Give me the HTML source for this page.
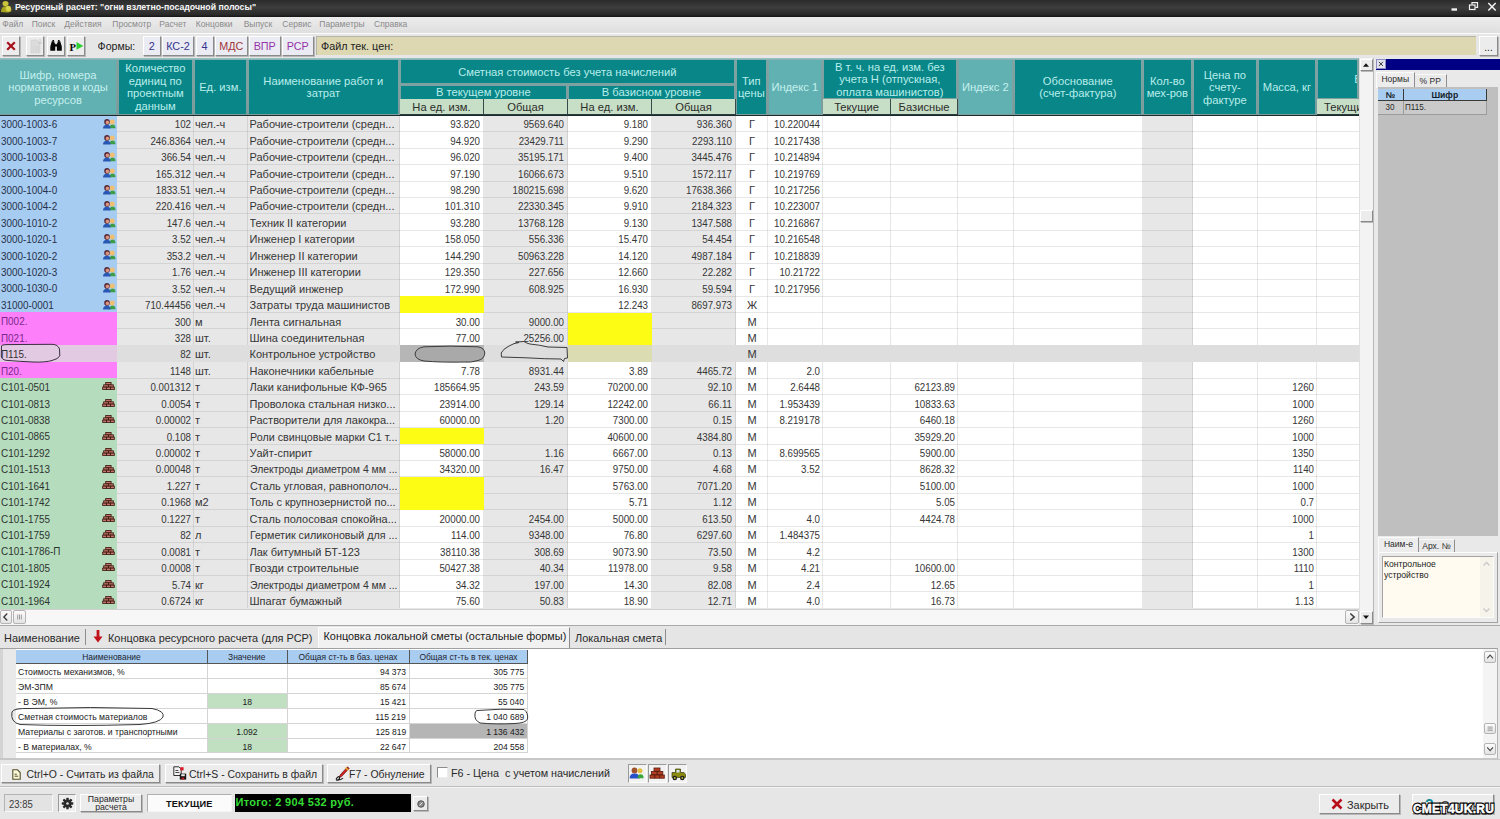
<!DOCTYPE html><html lang="ru"><head><meta charset="utf-8"><title>Ресурсный расчет</title><style>
html,body{margin:0;padding:0}
body{width:1500px;height:819px;overflow:hidden;position:relative;background:#e6e6e6;font-family:"Liberation Sans",sans-serif;font-size:11px;color:#363636}
div{position:absolute;box-sizing:border-box;white-space:nowrap;overflow:hidden}
.n{text-align:right;transform:scaleX(.885);transform-origin:100% 50%}
.k{display:inline-block;transform:scaleX(.9);transform-origin:0 50%}
.hd{background:#098687;color:#b8eeec;text-align:center;display:flex;align-items:center;justify-content:center;white-space:normal;line-height:12.5px;font-size:11.2px}
.hl{background:#62b1b2;color:#c4f0ee}
.sh{background:#c7dfc6;color:#2c2c2c;text-align:center;font-size:11.2px;line-height:16.500px;border-right:1px solid #3a4a4a;border-bottom:1px solid #2a3a3a}
.btn{background:#ececec;border:1px solid #fff;border-right-color:#8a8a8a;border-bottom-color:#8a8a8a;box-shadow:1px 1px 0 #b8b8b8}
.c{line-height:19.5px}
</style></head><body>
<div style="left:0px;top:0px;width:1500px;height:17px;background:linear-gradient(#2b2b2b,#3d3d3d 45%,#2a2a2a 85%,#161616)"></div>
<svg style="position:absolute;left:0;top:0" width="14" height="15" viewBox="0 0 14 15"><ellipse cx="5.5" cy="3.6" rx="3" ry="2.6" fill="#c9c43a"/><path d="M1 12 Q1 6 6 6.2 Q11.5 6.5 11.5 10 Q11.5 12.5 7 12.5 Z" fill="#a8a420"/><ellipse cx="8.3" cy="8.6" rx="2.6" ry="2.8" fill="#d8d44a"/></svg>
<div style="left:15px;top:0px;width:400px;height:17px;color:#f6f6f6;font-weight:bold;font-size:8.75px;line-height:15px">Ресурсный расчет: "огни взлетно-посадочной полосы"</div>
<svg style="position:absolute;left:1440px;top:0" width="60" height="17" viewBox="0 0 60 17" fill="none" stroke="#f2f2f2"><path d="M11.5 9.5h5.5" stroke-width="2.4"/><rect x="29.5" y="5" width="5.5" height="4.5" stroke-width="1.2"/><path d="M32 4.5V2.7h5.5v4.6h-2" stroke-width="1.2"/><path d="M48.3 3l7.4 7.6M55.7 3l-7.4 7.6" stroke-width="1.5"/></svg>
<div style="left:0px;top:17px;width:1500px;height:16px;background:linear-gradient(#ececec,#dfdfdf)"></div>
<div style="left:2.3px;top:17px;width:70px;height:16px;color:#8a8a8a;font-size:8.5px;line-height:15.5px">Файл</div>
<div style="left:31.7px;top:17px;width:70px;height:16px;color:#8a8a8a;font-size:8.5px;line-height:15.5px">Поиск</div>
<div style="left:64.3px;top:17px;width:70px;height:16px;color:#8a8a8a;font-size:8.5px;line-height:15.5px">Действия</div>
<div style="left:112.3px;top:17px;width:70px;height:16px;color:#8a8a8a;font-size:8.5px;line-height:15.5px">Просмотр</div>
<div style="left:159.3px;top:17px;width:70px;height:16px;color:#8a8a8a;font-size:8.5px;line-height:15.5px">Расчет</div>
<div style="left:195.7px;top:17px;width:70px;height:16px;color:#8a8a8a;font-size:8.5px;line-height:15.5px">Концовки</div>
<div style="left:243.7px;top:17px;width:70px;height:16px;color:#8a8a8a;font-size:8.5px;line-height:15.5px">Выпуск</div>
<div style="left:282.3px;top:17px;width:70px;height:16px;color:#8a8a8a;font-size:8.5px;line-height:15.5px">Сервис</div>
<div style="left:319.3px;top:17px;width:70px;height:16px;color:#8a8a8a;font-size:8.5px;line-height:15.5px">Параметры</div>
<div style="left:374px;top:17px;width:70px;height:16px;color:#8a8a8a;font-size:8.5px;line-height:15.5px">Справка</div>
<div style="left:0px;top:32.5px;width:1500px;height:25.5px;background:#e6e6e6;border-top:1.5px solid #fbfbfb"></div>
<div class="btn" style="left:2px;top:36px;width:18px;height:19.5px;"></div>
<div class="btn" style="left:26px;top:36px;width:18px;height:19.5px;"></div>
<div class="btn" style="left:46.5px;top:36px;width:18px;height:19.5px;"></div>
<div class="btn" style="left:66.5px;top:36px;width:18px;height:19.5px;"></div>
<svg style="position:absolute;left:0;top:33px" width="90" height="25" viewBox="0 0 90 25"><path d="M7.2 9.2l7.6 7.6M14.8 9.2l-7.6 7.6" stroke="#a8101c" stroke-width="2.2" fill="none"/><g fill="#d4d4d4"><path d="M31 7h6l3 3v10h-9z" fill="#dcdcdc" stroke="#cfcfcf" stroke-width=".6"/><rect x="33" y="13" width="1.2" height="6"/><rect x="35.4" y="13" width="1.2" height="6"/><rect x="37.6" y="13" width="1.2" height="6"/><path d="M40 6v5M38 9l2 2 2-2" stroke="#c8c8c8" fill="none"/></g><g fill="#080808"><path d="M51.8 8.2h2.6v2h.8v7.6h-4.9v-4.3z"/><path d="M57.6 8.2h2.6l1.6 5.3v4.3h-4.9v-7.6h.7z"/><rect x="54.6" y="11.2" width="3" height="2.4"/><rect x="52.4" y="7" width="1.6" height="1.4"/><rect x="58" y="7" width="1.6" height="1.4"/></g><path d="M76.5 9l6.8 3.9-6.8 3.9z" fill="#2fd02f"/><text x="69.6" y="18" font-family="Liberation Serif,serif" font-weight="bold" font-size="10.5" fill="#080808">Р</text></svg>
<div style="left:97.6px;top:36px;width:40px;height:20px;font-size:10.6px;line-height:20px;color:#222">Формы:</div>
<div class="btn" style="left:142.5px;top:36px;width:18.5px;height:19.5px;color:#34348c;text-align:center;font-size:10.8px;line-height:18px;background:#ebebf4">2</div>
<div class="btn" style="left:162px;top:36px;width:32px;height:19.5px;color:#34348c;text-align:center;font-size:10.8px;line-height:18px;background:#ebebf4">КС-2</div>
<div class="btn" style="left:195.5px;top:36px;width:18px;height:19.5px;color:#34348c;text-align:center;font-size:10.8px;line-height:18px;background:#ebebf4">4</div>
<div class="btn" style="left:215px;top:36px;width:32.5px;height:19.5px;color:#a03434;text-align:center;font-size:10.8px;line-height:18px;background:#ebebf4">МДС</div>
<div class="btn" style="left:249px;top:36px;width:31.5px;height:19.5px;color:#9434a4;text-align:center;font-size:10.8px;line-height:18px;background:#ebebf4">ВПР</div>
<div class="btn" style="left:282px;top:36px;width:31.5px;height:19.5px;color:#9434a4;text-align:center;font-size:10.8px;line-height:18px;background:#ebebf4">РСР</div>
<div style="left:316px;top:35.5px;width:1160px;height:19.5px;background:#ddd8b2;border-top:1px solid #b4b4a8;border-left:1px solid #b4b4a8;font-size:10.8px;line-height:18.5px;padding-left:4px;color:#222">Файл тек. цен:</div>
<div class="btn" style="left:1479px;top:36px;width:19px;height:19.5px;text-align:center;line-height:22px;font-size:10px;color:#222">...</div>
<div style="left:0px;top:58px;width:1359px;height:567px;background:#fff"></div>
<div style="left:0px;top:58px;width:1359px;height:57.5px;background:linear-gradient(#9cc8c8,#7fa4a4 2.5px,#7c9c9c)"></div>
<div class="hd hl" style="left:0px;top:60.3px;width:116.1px;height:54.2px;">Шифр, номера нормативов и коды ресурсов</div>
<div class="hd" style="left:118.6px;top:60.3px;width:73.5px;height:54.2px;">Количество единиц по проектным данным</div>
<div class="hd" style="left:194.6px;top:60.3px;width:51.5px;height:54.2px;">Ед. изм.</div>
<div class="hd" style="left:248.6px;top:60.3px;width:149.5px;height:54.2px;">Наименование работ и затрат</div>
<div class="hd" style="left:400.6px;top:60.3px;width:333.5px;height:23.2px;">Сметная стоимость без учета начислений</div>
<div class="hd" style="left:400.6px;top:85.5px;width:165.5px;height:13px;">В текущем уровне</div>
<div class="hd" style="left:568.6px;top:85.5px;width:165.5px;height:13px;">В базисном уровне</div>
<div class="hd" style="left:736.6px;top:60.3px;width:29.5px;height:54.2px;">Тип цены</div>
<div class="hd hl" style="left:768.6px;top:60.3px;width:52.5px;height:54.2px;">Индекс 1</div>
<div class="hd" style="left:823.6px;top:60.3px;width:132.5px;height:38.2px;">В т. ч. на ед. изм. без учета Н (отпускная, оплата машинистов)</div>
<div class="hd hl" style="left:958.6px;top:60.3px;width:53.5px;height:54.2px;">Индекс 2</div>
<div class="hd" style="left:1014.6px;top:60.3px;width:126.5px;height:54.2px;">Обоснование<br>(счет-фактура)</div>
<div class="hd" style="left:1143.6px;top:60.3px;width:47.5px;height:54.2px;">Кол-во мех-ров</div>
<div class="hd" style="left:1193.6px;top:60.3px;width:62.5px;height:54.2px;">Цена по счету-фактуре</div>
<div class="hd" style="left:1258.6px;top:60.3px;width:56.5px;height:54.2px;">Масса, кг</div>
<div class="hd" style="left:1317.6px;top:60.3px;width:39.5px;height:38.2px;"><span style="position:absolute;right:-4.5px;top:12.5px">В</span></div>
<div class="sh" style="left:400px;top:99.4px;width:84px;height:15.6px;">На ед. изм.</div>
<div class="sh" style="left:484px;top:99.4px;width:84px;height:15.6px;">Общая</div>
<div class="sh" style="left:568px;top:99.4px;width:84px;height:15.6px;">На ед. изм.</div>
<div class="sh" style="left:652px;top:99.4px;width:84px;height:15.6px;">Общая</div>
<div class="sh" style="left:823px;top:99.4px;width:68px;height:15.6px;">Текущие</div>
<div class="sh" style="left:891px;top:99.4px;width:67px;height:15.6px;">Базисные</div>
<div class="sh" style="left:1317px;top:99.4px;width:60px;height:15.6px;border-right:0;text-align:left;padding-left:7px">Текущие</div>
<div style="left:118px;top:115.3px;width:76px;height:493.11px;background:#e7e7e7"></div>
<div style="left:194px;top:115.3px;width:54px;height:493.11px;background:#e7e7e7"></div>
<div style="left:248px;top:115.3px;width:152px;height:493.11px;background:#e7e7e7"></div>
<div style="left:484px;top:115.3px;width:84px;height:493.11px;background:#e7e7e7"></div>
<div style="left:652px;top:115.3px;width:84px;height:493.11px;background:#e7e7e7"></div>
<div style="left:1143px;top:115.3px;width:50px;height:493.11px;background:#e7e7e7"></div>
<div style="left:117px;top:131.237px;width:1242px;height:1px;background:rgba(110,110,110,.17)"></div>
<div style="left:117px;top:147.674px;width:1242px;height:1px;background:rgba(110,110,110,.17)"></div>
<div style="left:117px;top:164.111px;width:1242px;height:1px;background:rgba(110,110,110,.17)"></div>
<div style="left:117px;top:180.548px;width:1242px;height:1px;background:rgba(110,110,110,.17)"></div>
<div style="left:117px;top:196.985px;width:1242px;height:1px;background:rgba(110,110,110,.17)"></div>
<div style="left:117px;top:213.422px;width:1242px;height:1px;background:rgba(110,110,110,.17)"></div>
<div style="left:117px;top:229.859px;width:1242px;height:1px;background:rgba(110,110,110,.17)"></div>
<div style="left:117px;top:246.296px;width:1242px;height:1px;background:rgba(110,110,110,.17)"></div>
<div style="left:117px;top:262.733px;width:1242px;height:1px;background:rgba(110,110,110,.17)"></div>
<div style="left:117px;top:279.17px;width:1242px;height:1px;background:rgba(110,110,110,.17)"></div>
<div style="left:117px;top:295.607px;width:1242px;height:1px;background:rgba(110,110,110,.17)"></div>
<div style="left:117px;top:312.044px;width:1242px;height:1px;background:rgba(110,110,110,.17)"></div>
<div style="left:117px;top:328.481px;width:1242px;height:1px;background:rgba(110,110,110,.17)"></div>
<div style="left:117px;top:344.918px;width:1242px;height:1px;background:rgba(110,110,110,.17)"></div>
<div style="left:117px;top:361.355px;width:1242px;height:1px;background:rgba(110,110,110,.17)"></div>
<div style="left:117px;top:377.792px;width:1242px;height:1px;background:rgba(110,110,110,.17)"></div>
<div style="left:117px;top:394.229px;width:1242px;height:1px;background:rgba(110,110,110,.17)"></div>
<div style="left:117px;top:410.666px;width:1242px;height:1px;background:rgba(110,110,110,.17)"></div>
<div style="left:117px;top:427.103px;width:1242px;height:1px;background:rgba(110,110,110,.17)"></div>
<div style="left:117px;top:443.54px;width:1242px;height:1px;background:rgba(110,110,110,.17)"></div>
<div style="left:117px;top:459.977px;width:1242px;height:1px;background:rgba(110,110,110,.17)"></div>
<div style="left:117px;top:476.414px;width:1242px;height:1px;background:rgba(110,110,110,.17)"></div>
<div style="left:117px;top:492.851px;width:1242px;height:1px;background:rgba(110,110,110,.17)"></div>
<div style="left:117px;top:509.288px;width:1242px;height:1px;background:rgba(110,110,110,.17)"></div>
<div style="left:117px;top:525.725px;width:1242px;height:1px;background:rgba(110,110,110,.17)"></div>
<div style="left:117px;top:542.162px;width:1242px;height:1px;background:rgba(110,110,110,.17)"></div>
<div style="left:117px;top:558.599px;width:1242px;height:1px;background:rgba(110,110,110,.17)"></div>
<div style="left:117px;top:575.036px;width:1242px;height:1px;background:rgba(110,110,110,.17)"></div>
<div style="left:117px;top:591.473px;width:1242px;height:1px;background:rgba(110,110,110,.17)"></div>
<div style="left:117px;top:607.91px;width:1242px;height:1px;background:rgba(110,110,110,.17)"></div>
<div style="left:117px;top:115.3px;width:1px;height:493.11px;background:rgba(110,110,110,.17)"></div>
<div style="left:193px;top:115.3px;width:1px;height:493.11px;background:rgba(110,110,110,.17)"></div>
<div style="left:247px;top:115.3px;width:1px;height:493.11px;background:rgba(110,110,110,.17)"></div>
<div style="left:399px;top:115.3px;width:1px;height:493.11px;background:rgba(110,110,110,.17)"></div>
<div style="left:483px;top:115.3px;width:1px;height:493.11px;background:rgba(110,110,110,.17)"></div>
<div style="left:567px;top:115.3px;width:1px;height:493.11px;background:rgba(110,110,110,.17)"></div>
<div style="left:651px;top:115.3px;width:1px;height:493.11px;background:rgba(110,110,110,.17)"></div>
<div style="left:735px;top:115.3px;width:1px;height:493.11px;background:rgba(110,110,110,.17)"></div>
<div style="left:767px;top:115.3px;width:1px;height:493.11px;background:rgba(110,110,110,.17)"></div>
<div style="left:822px;top:115.3px;width:1px;height:493.11px;background:rgba(110,110,110,.17)"></div>
<div style="left:890px;top:115.3px;width:1px;height:493.11px;background:rgba(110,110,110,.17)"></div>
<div style="left:957px;top:115.3px;width:1px;height:493.11px;background:rgba(110,110,110,.17)"></div>
<div style="left:1013px;top:115.3px;width:1px;height:493.11px;background:rgba(110,110,110,.17)"></div>
<div style="left:1142px;top:115.3px;width:1px;height:493.11px;background:rgba(110,110,110,.17)"></div>
<div style="left:1192px;top:115.3px;width:1px;height:493.11px;background:rgba(110,110,110,.17)"></div>
<div style="left:1257px;top:115.3px;width:1px;height:493.11px;background:rgba(110,110,110,.17)"></div>
<div style="left:1316px;top:115.3px;width:1px;height:493.11px;background:rgba(110,110,110,.17)"></div>
<div style="left:0px;top:115.1px;width:117.3px;height:16.837px;background:#a7ccf2;color:#26324a;padding-left:.7px;line-height:19.437px"><span class="k">3000-1003-6</span><svg width="13" height="10" viewBox="0 0 13 10" style="position:absolute;left:102.600px;top:3.800px"><path d="M6.600 9.300q0-3.900 3-3.900 2.900 0 2.900 3.900z" fill="#3c9c48"/><circle cx="9.200" cy="3.100" r="2.500" fill="#f0be70"/><path d="M0 9.500q0-3.800 3.900-3.800 3.700 0 3.700 3.800z" fill="#2858b4"/><circle cx="4" cy="2.900" r="2.800" fill="#55283a"/><circle cx="4.400" cy="3.400" r="1.800" fill="#dc947c"/></svg></div>
<div class="n c" style="left:118px;top:115.3px;width:73px;height:16.437px;">102</div>
<div class="c" style="left:195px;top:115.3px;width:52px;height:16.437px;">чел.-ч</div>
<div class="c" style="left:249.5px;top:115.3px;width:150.5px;height:16.437px;">Рабочие-строители (средн...</div>
<div class="n c" style="left:400px;top:115.3px;width:80px;height:16.437px;">93.820</div>
<div class="n c" style="left:484px;top:115.3px;width:80px;height:16.437px;">9569.640</div>
<div class="n c" style="left:568px;top:115.3px;width:80px;height:16.437px;">9.180</div>
<div class="n c" style="left:652px;top:115.3px;width:80px;height:16.437px;">936.360</div>
<div class="c" style="left:736px;top:115.3px;width:32px;height:16.437px;text-align:center">Г</div>
<div class="n c" style="left:768px;top:115.3px;width:52px;height:16.437px;">10.220044</div>
<div style="left:0px;top:131.537px;width:117.3px;height:16.837px;background:#a7ccf2;color:#26324a;padding-left:.7px;line-height:19.437px"><span class="k">3000-1003-7</span><svg width="13" height="10" viewBox="0 0 13 10" style="position:absolute;left:102.600px;top:3.800px"><path d="M6.600 9.300q0-3.900 3-3.900 2.900 0 2.900 3.900z" fill="#3c9c48"/><circle cx="9.200" cy="3.100" r="2.500" fill="#f0be70"/><path d="M0 9.500q0-3.800 3.900-3.800 3.700 0 3.700 3.800z" fill="#2858b4"/><circle cx="4" cy="2.900" r="2.800" fill="#55283a"/><circle cx="4.400" cy="3.400" r="1.800" fill="#dc947c"/></svg></div>
<div class="n c" style="left:118px;top:131.737px;width:73px;height:16.437px;">246.8364</div>
<div class="c" style="left:195px;top:131.737px;width:52px;height:16.437px;">чел.-ч</div>
<div class="c" style="left:249.5px;top:131.737px;width:150.5px;height:16.437px;">Рабочие-строители (средн...</div>
<div class="n c" style="left:400px;top:131.737px;width:80px;height:16.437px;">94.920</div>
<div class="n c" style="left:484px;top:131.737px;width:80px;height:16.437px;">23429.711</div>
<div class="n c" style="left:568px;top:131.737px;width:80px;height:16.437px;">9.290</div>
<div class="n c" style="left:652px;top:131.737px;width:80px;height:16.437px;">2293.110</div>
<div class="c" style="left:736px;top:131.737px;width:32px;height:16.437px;text-align:center">Г</div>
<div class="n c" style="left:768px;top:131.737px;width:52px;height:16.437px;">10.217438</div>
<div style="left:0px;top:147.974px;width:117.3px;height:16.837px;background:#a7ccf2;color:#26324a;padding-left:.7px;line-height:19.437px"><span class="k">3000-1003-8</span><svg width="13" height="10" viewBox="0 0 13 10" style="position:absolute;left:102.600px;top:3.800px"><path d="M6.600 9.300q0-3.900 3-3.900 2.900 0 2.900 3.900z" fill="#3c9c48"/><circle cx="9.200" cy="3.100" r="2.500" fill="#f0be70"/><path d="M0 9.500q0-3.800 3.900-3.800 3.700 0 3.700 3.800z" fill="#2858b4"/><circle cx="4" cy="2.900" r="2.800" fill="#55283a"/><circle cx="4.400" cy="3.400" r="1.800" fill="#dc947c"/></svg></div>
<div class="n c" style="left:118px;top:148.174px;width:73px;height:16.437px;">366.54</div>
<div class="c" style="left:195px;top:148.174px;width:52px;height:16.437px;">чел.-ч</div>
<div class="c" style="left:249.5px;top:148.174px;width:150.5px;height:16.437px;">Рабочие-строители (средн...</div>
<div class="n c" style="left:400px;top:148.174px;width:80px;height:16.437px;">96.020</div>
<div class="n c" style="left:484px;top:148.174px;width:80px;height:16.437px;">35195.171</div>
<div class="n c" style="left:568px;top:148.174px;width:80px;height:16.437px;">9.400</div>
<div class="n c" style="left:652px;top:148.174px;width:80px;height:16.437px;">3445.476</div>
<div class="c" style="left:736px;top:148.174px;width:32px;height:16.437px;text-align:center">Г</div>
<div class="n c" style="left:768px;top:148.174px;width:52px;height:16.437px;">10.214894</div>
<div style="left:0px;top:164.411px;width:117.3px;height:16.837px;background:#a7ccf2;color:#26324a;padding-left:.7px;line-height:19.437px"><span class="k">3000-1003-9</span><svg width="13" height="10" viewBox="0 0 13 10" style="position:absolute;left:102.600px;top:3.800px"><path d="M6.600 9.300q0-3.900 3-3.900 2.900 0 2.900 3.900z" fill="#3c9c48"/><circle cx="9.200" cy="3.100" r="2.500" fill="#f0be70"/><path d="M0 9.500q0-3.800 3.900-3.800 3.700 0 3.700 3.800z" fill="#2858b4"/><circle cx="4" cy="2.900" r="2.800" fill="#55283a"/><circle cx="4.400" cy="3.400" r="1.800" fill="#dc947c"/></svg></div>
<div class="n c" style="left:118px;top:164.611px;width:73px;height:16.437px;">165.312</div>
<div class="c" style="left:195px;top:164.611px;width:52px;height:16.437px;">чел.-ч</div>
<div class="c" style="left:249.5px;top:164.611px;width:150.5px;height:16.437px;">Рабочие-строители (средн...</div>
<div class="n c" style="left:400px;top:164.611px;width:80px;height:16.437px;">97.190</div>
<div class="n c" style="left:484px;top:164.611px;width:80px;height:16.437px;">16066.673</div>
<div class="n c" style="left:568px;top:164.611px;width:80px;height:16.437px;">9.510</div>
<div class="n c" style="left:652px;top:164.611px;width:80px;height:16.437px;">1572.117</div>
<div class="c" style="left:736px;top:164.611px;width:32px;height:16.437px;text-align:center">Г</div>
<div class="n c" style="left:768px;top:164.611px;width:52px;height:16.437px;">10.219769</div>
<div style="left:0px;top:180.848px;width:117.3px;height:16.837px;background:#a7ccf2;color:#26324a;padding-left:.7px;line-height:19.437px"><span class="k">3000-1004-0</span><svg width="13" height="10" viewBox="0 0 13 10" style="position:absolute;left:102.600px;top:3.800px"><path d="M6.600 9.300q0-3.900 3-3.900 2.900 0 2.900 3.900z" fill="#3c9c48"/><circle cx="9.200" cy="3.100" r="2.500" fill="#f0be70"/><path d="M0 9.500q0-3.800 3.900-3.800 3.700 0 3.700 3.800z" fill="#2858b4"/><circle cx="4" cy="2.900" r="2.800" fill="#55283a"/><circle cx="4.400" cy="3.400" r="1.800" fill="#dc947c"/></svg></div>
<div class="n c" style="left:118px;top:181.048px;width:73px;height:16.437px;">1833.51</div>
<div class="c" style="left:195px;top:181.048px;width:52px;height:16.437px;">чел.-ч</div>
<div class="c" style="left:249.5px;top:181.048px;width:150.5px;height:16.437px;">Рабочие-строители (средн...</div>
<div class="n c" style="left:400px;top:181.048px;width:80px;height:16.437px;">98.290</div>
<div class="n c" style="left:484px;top:181.048px;width:80px;height:16.437px;">180215.698</div>
<div class="n c" style="left:568px;top:181.048px;width:80px;height:16.437px;">9.620</div>
<div class="n c" style="left:652px;top:181.048px;width:80px;height:16.437px;">17638.366</div>
<div class="c" style="left:736px;top:181.048px;width:32px;height:16.437px;text-align:center">Г</div>
<div class="n c" style="left:768px;top:181.048px;width:52px;height:16.437px;">10.217256</div>
<div style="left:0px;top:197.285px;width:117.3px;height:16.837px;background:#a7ccf2;color:#26324a;padding-left:.7px;line-height:19.437px"><span class="k">3000-1004-2</span><svg width="13" height="10" viewBox="0 0 13 10" style="position:absolute;left:102.600px;top:3.800px"><path d="M6.600 9.300q0-3.900 3-3.900 2.900 0 2.900 3.900z" fill="#3c9c48"/><circle cx="9.200" cy="3.100" r="2.500" fill="#f0be70"/><path d="M0 9.500q0-3.800 3.900-3.800 3.700 0 3.700 3.800z" fill="#2858b4"/><circle cx="4" cy="2.900" r="2.800" fill="#55283a"/><circle cx="4.400" cy="3.400" r="1.800" fill="#dc947c"/></svg></div>
<div class="n c" style="left:118px;top:197.485px;width:73px;height:16.437px;">220.416</div>
<div class="c" style="left:195px;top:197.485px;width:52px;height:16.437px;">чел.-ч</div>
<div class="c" style="left:249.5px;top:197.485px;width:150.5px;height:16.437px;">Рабочие-строители (средн...</div>
<div class="n c" style="left:400px;top:197.485px;width:80px;height:16.437px;">101.310</div>
<div class="n c" style="left:484px;top:197.485px;width:80px;height:16.437px;">22330.345</div>
<div class="n c" style="left:568px;top:197.485px;width:80px;height:16.437px;">9.910</div>
<div class="n c" style="left:652px;top:197.485px;width:80px;height:16.437px;">2184.323</div>
<div class="c" style="left:736px;top:197.485px;width:32px;height:16.437px;text-align:center">Г</div>
<div class="n c" style="left:768px;top:197.485px;width:52px;height:16.437px;">10.223007</div>
<div style="left:0px;top:213.722px;width:117.3px;height:16.837px;background:#a7ccf2;color:#26324a;padding-left:.7px;line-height:19.437px"><span class="k">3000-1010-2</span><svg width="13" height="10" viewBox="0 0 13 10" style="position:absolute;left:102.600px;top:3.800px"><path d="M6.600 9.300q0-3.900 3-3.900 2.900 0 2.900 3.900z" fill="#3c9c48"/><circle cx="9.200" cy="3.100" r="2.500" fill="#f0be70"/><path d="M0 9.500q0-3.800 3.900-3.800 3.700 0 3.700 3.800z" fill="#2858b4"/><circle cx="4" cy="2.900" r="2.800" fill="#55283a"/><circle cx="4.400" cy="3.400" r="1.800" fill="#dc947c"/></svg></div>
<div class="n c" style="left:118px;top:213.922px;width:73px;height:16.437px;">147.6</div>
<div class="c" style="left:195px;top:213.922px;width:52px;height:16.437px;">чел.-ч</div>
<div class="c" style="left:249.5px;top:213.922px;width:150.5px;height:16.437px;">Техник II категории</div>
<div class="n c" style="left:400px;top:213.922px;width:80px;height:16.437px;">93.280</div>
<div class="n c" style="left:484px;top:213.922px;width:80px;height:16.437px;">13768.128</div>
<div class="n c" style="left:568px;top:213.922px;width:80px;height:16.437px;">9.130</div>
<div class="n c" style="left:652px;top:213.922px;width:80px;height:16.437px;">1347.588</div>
<div class="c" style="left:736px;top:213.922px;width:32px;height:16.437px;text-align:center">Г</div>
<div class="n c" style="left:768px;top:213.922px;width:52px;height:16.437px;">10.216867</div>
<div style="left:0px;top:230.159px;width:117.3px;height:16.837px;background:#a7ccf2;color:#26324a;padding-left:.7px;line-height:19.437px"><span class="k">3000-1020-1</span><svg width="13" height="10" viewBox="0 0 13 10" style="position:absolute;left:102.600px;top:3.800px"><path d="M6.600 9.300q0-3.900 3-3.900 2.900 0 2.900 3.900z" fill="#3c9c48"/><circle cx="9.200" cy="3.100" r="2.500" fill="#f0be70"/><path d="M0 9.500q0-3.800 3.900-3.800 3.700 0 3.700 3.800z" fill="#2858b4"/><circle cx="4" cy="2.900" r="2.800" fill="#55283a"/><circle cx="4.400" cy="3.400" r="1.800" fill="#dc947c"/></svg></div>
<div class="n c" style="left:118px;top:230.359px;width:73px;height:16.437px;">3.52</div>
<div class="c" style="left:195px;top:230.359px;width:52px;height:16.437px;">чел.-ч</div>
<div class="c" style="left:249.5px;top:230.359px;width:150.5px;height:16.437px;">Инженер I категории</div>
<div class="n c" style="left:400px;top:230.359px;width:80px;height:16.437px;">158.050</div>
<div class="n c" style="left:484px;top:230.359px;width:80px;height:16.437px;">556.336</div>
<div class="n c" style="left:568px;top:230.359px;width:80px;height:16.437px;">15.470</div>
<div class="n c" style="left:652px;top:230.359px;width:80px;height:16.437px;">54.454</div>
<div class="c" style="left:736px;top:230.359px;width:32px;height:16.437px;text-align:center">Г</div>
<div class="n c" style="left:768px;top:230.359px;width:52px;height:16.437px;">10.216548</div>
<div style="left:0px;top:246.596px;width:117.3px;height:16.837px;background:#a7ccf2;color:#26324a;padding-left:.7px;line-height:19.437px"><span class="k">3000-1020-2</span><svg width="13" height="10" viewBox="0 0 13 10" style="position:absolute;left:102.600px;top:3.800px"><path d="M6.600 9.300q0-3.900 3-3.900 2.900 0 2.900 3.900z" fill="#3c9c48"/><circle cx="9.200" cy="3.100" r="2.500" fill="#f0be70"/><path d="M0 9.500q0-3.800 3.900-3.800 3.700 0 3.700 3.800z" fill="#2858b4"/><circle cx="4" cy="2.900" r="2.800" fill="#55283a"/><circle cx="4.400" cy="3.400" r="1.800" fill="#dc947c"/></svg></div>
<div class="n c" style="left:118px;top:246.796px;width:73px;height:16.437px;">353.2</div>
<div class="c" style="left:195px;top:246.796px;width:52px;height:16.437px;">чел.-ч</div>
<div class="c" style="left:249.5px;top:246.796px;width:150.5px;height:16.437px;">Инженер II категории</div>
<div class="n c" style="left:400px;top:246.796px;width:80px;height:16.437px;">144.290</div>
<div class="n c" style="left:484px;top:246.796px;width:80px;height:16.437px;">50963.228</div>
<div class="n c" style="left:568px;top:246.796px;width:80px;height:16.437px;">14.120</div>
<div class="n c" style="left:652px;top:246.796px;width:80px;height:16.437px;">4987.184</div>
<div class="c" style="left:736px;top:246.796px;width:32px;height:16.437px;text-align:center">Г</div>
<div class="n c" style="left:768px;top:246.796px;width:52px;height:16.437px;">10.218839</div>
<div style="left:0px;top:263.033px;width:117.3px;height:16.837px;background:#a7ccf2;color:#26324a;padding-left:.7px;line-height:19.437px"><span class="k">3000-1020-3</span><svg width="13" height="10" viewBox="0 0 13 10" style="position:absolute;left:102.600px;top:3.800px"><path d="M6.600 9.300q0-3.900 3-3.900 2.900 0 2.900 3.900z" fill="#3c9c48"/><circle cx="9.200" cy="3.100" r="2.500" fill="#f0be70"/><path d="M0 9.500q0-3.800 3.900-3.800 3.700 0 3.700 3.800z" fill="#2858b4"/><circle cx="4" cy="2.900" r="2.800" fill="#55283a"/><circle cx="4.400" cy="3.400" r="1.800" fill="#dc947c"/></svg></div>
<div class="n c" style="left:118px;top:263.233px;width:73px;height:16.437px;">1.76</div>
<div class="c" style="left:195px;top:263.233px;width:52px;height:16.437px;">чел.-ч</div>
<div class="c" style="left:249.5px;top:263.233px;width:150.5px;height:16.437px;">Инженер III категории</div>
<div class="n c" style="left:400px;top:263.233px;width:80px;height:16.437px;">129.350</div>
<div class="n c" style="left:484px;top:263.233px;width:80px;height:16.437px;">227.656</div>
<div class="n c" style="left:568px;top:263.233px;width:80px;height:16.437px;">12.660</div>
<div class="n c" style="left:652px;top:263.233px;width:80px;height:16.437px;">22.282</div>
<div class="c" style="left:736px;top:263.233px;width:32px;height:16.437px;text-align:center">Г</div>
<div class="n c" style="left:768px;top:263.233px;width:52px;height:16.437px;">10.21722</div>
<div style="left:0px;top:279.47px;width:117.3px;height:16.837px;background:#a7ccf2;color:#26324a;padding-left:.7px;line-height:19.437px"><span class="k">3000-1030-0</span><svg width="13" height="10" viewBox="0 0 13 10" style="position:absolute;left:102.600px;top:3.800px"><path d="M6.600 9.300q0-3.900 3-3.900 2.900 0 2.900 3.900z" fill="#3c9c48"/><circle cx="9.200" cy="3.100" r="2.500" fill="#f0be70"/><path d="M0 9.500q0-3.800 3.900-3.800 3.700 0 3.700 3.800z" fill="#2858b4"/><circle cx="4" cy="2.900" r="2.800" fill="#55283a"/><circle cx="4.400" cy="3.400" r="1.800" fill="#dc947c"/></svg></div>
<div class="n c" style="left:118px;top:279.67px;width:73px;height:16.437px;">3.52</div>
<div class="c" style="left:195px;top:279.67px;width:52px;height:16.437px;">чел.-ч</div>
<div class="c" style="left:249.5px;top:279.67px;width:150.5px;height:16.437px;">Ведущий инженер</div>
<div class="n c" style="left:400px;top:279.67px;width:80px;height:16.437px;">172.990</div>
<div class="n c" style="left:484px;top:279.67px;width:80px;height:16.437px;">608.925</div>
<div class="n c" style="left:568px;top:279.67px;width:80px;height:16.437px;">16.930</div>
<div class="n c" style="left:652px;top:279.67px;width:80px;height:16.437px;">59.594</div>
<div class="c" style="left:736px;top:279.67px;width:32px;height:16.437px;text-align:center">Г</div>
<div class="n c" style="left:768px;top:279.67px;width:52px;height:16.437px;">10.217956</div>
<div style="left:0px;top:295.907px;width:117.3px;height:16.837px;background:#a7ccf2;color:#26324a;padding-left:.7px;line-height:19.437px"><span class="k">31000-0001</span><svg width="13" height="10" viewBox="0 0 13 10" style="position:absolute;left:102.600px;top:3.800px"><path d="M6.600 9.300q0-3.900 3-3.900 2.900 0 2.900 3.900z" fill="#3c9c48"/><circle cx="9.200" cy="3.100" r="2.500" fill="#f0be70"/><path d="M0 9.500q0-3.800 3.900-3.800 3.700 0 3.700 3.800z" fill="#2858b4"/><circle cx="4" cy="2.900" r="2.800" fill="#55283a"/><circle cx="4.400" cy="3.400" r="1.800" fill="#dc947c"/></svg></div>
<div class="n c" style="left:118px;top:296.107px;width:73px;height:16.437px;">710.44456</div>
<div class="c" style="left:195px;top:296.107px;width:52px;height:16.437px;">чел.-ч</div>
<div class="c" style="left:249.5px;top:296.107px;width:150.5px;height:16.437px;">Затраты труда машинистов</div>
<div style="left:399.5px;top:296.107px;width:84px;height:16.437px;background:#fcfc14"></div>
<div class="n c" style="left:568px;top:296.107px;width:80px;height:16.437px;">12.243</div>
<div class="n c" style="left:652px;top:296.107px;width:80px;height:16.437px;">8697.973</div>
<div class="c" style="left:736px;top:296.107px;width:32px;height:16.437px;text-align:center">Ж</div>
<div style="left:0px;top:312.344px;width:117.3px;height:16.837px;background:#fd80fa;color:#7a2a8a;padding-left:.7px;line-height:19.437px"><span class="k">П002.</span></div>
<div class="n c" style="left:118px;top:312.544px;width:73px;height:16.437px;">300</div>
<div class="c" style="left:195px;top:312.544px;width:52px;height:16.437px;">м</div>
<div class="c" style="left:249.5px;top:312.544px;width:150.5px;height:16.437px;">Лента сигнальная</div>
<div class="n c" style="left:400px;top:312.544px;width:80px;height:16.437px;">30.00</div>
<div class="n c" style="left:484px;top:312.544px;width:80px;height:16.437px;">9000.00</div>
<div style="left:567.5px;top:312.544px;width:84px;height:16.437px;background:#fcfc14"></div>
<div class="c" style="left:736px;top:312.544px;width:32px;height:16.437px;text-align:center">М</div>
<div style="left:0px;top:328.781px;width:117.3px;height:16.837px;background:#fd80fa;color:#7a2a8a;padding-left:.7px;line-height:19.437px"><span class="k">П021.</span></div>
<div class="n c" style="left:118px;top:328.981px;width:73px;height:16.437px;">328</div>
<div class="c" style="left:195px;top:328.981px;width:52px;height:16.437px;">шт.</div>
<div class="c" style="left:249.5px;top:328.981px;width:150.5px;height:16.437px;">Шина соединительная</div>
<div class="n c" style="left:400px;top:328.981px;width:80px;height:16.437px;">77.00</div>
<div class="n c" style="left:484px;top:328.981px;width:80px;height:16.437px;">25256.00</div>
<div style="left:567.5px;top:328.981px;width:84px;height:16.437px;background:#fcfc14"></div>
<div class="c" style="left:736px;top:328.981px;width:32px;height:16.437px;text-align:center">М</div>
<div style="left:117px;top:345.418px;width:1242px;height:16.437px;background:#dedede"></div>
<div style="left:0px;top:345.218px;width:117.3px;height:16.837px;background:#e2cae2;color:#333;padding-left:.7px;line-height:19.437px"><span class="k">П115.</span></div>
<div class="n c" style="left:118px;top:345.418px;width:73px;height:16.437px;">82</div>
<div class="c" style="left:195px;top:345.418px;width:52px;height:16.437px;">шт.</div>
<div class="c" style="left:249.5px;top:345.418px;width:150.5px;height:16.437px;">Контрольное устройство</div>
<div class="c" style="left:736px;top:345.418px;width:32px;height:16.437px;text-align:center">М</div>
<div style="left:400px;top:345.418px;width:84px;height:16.437px;background:#b6b6b6"></div>
<div style="left:568px;top:345.418px;width:84px;height:16.437px;background:#dcdcb2"></div>
<div style="left:0px;top:361.655px;width:117.3px;height:16.837px;background:#fd80fa;color:#7a2a8a;padding-left:.7px;line-height:19.437px"><span class="k">П20.</span></div>
<div class="n c" style="left:118px;top:361.855px;width:73px;height:16.437px;">1148</div>
<div class="c" style="left:195px;top:361.855px;width:52px;height:16.437px;">шт.</div>
<div class="c" style="left:249.5px;top:361.855px;width:150.5px;height:16.437px;">Наконечники кабельные</div>
<div class="n c" style="left:400px;top:361.855px;width:80px;height:16.437px;">7.78</div>
<div class="n c" style="left:484px;top:361.855px;width:80px;height:16.437px;">8931.44</div>
<div class="n c" style="left:568px;top:361.855px;width:80px;height:16.437px;">3.89</div>
<div class="n c" style="left:652px;top:361.855px;width:80px;height:16.437px;">4465.72</div>
<div class="c" style="left:736px;top:361.855px;width:32px;height:16.437px;text-align:center">М</div>
<div class="n c" style="left:768px;top:361.855px;width:52px;height:16.437px;">2.0</div>
<div style="left:0px;top:378.092px;width:117.3px;height:16.837px;background:#b6dcbe;color:#2c3430;padding-left:.7px;line-height:19.437px"><span class="k">С101-0501</span><svg width="13" height="8.400" viewBox="0 0 14 9" style="position:absolute;left:102.200px;top:4.400px"><rect x="4" y=".5" width="5.800" height="2.500" fill="#c4746a" stroke="#3c1a10" stroke-width=".9"/><rect x="1.800" y="3" width="5.200" height="2.500" fill="#c4746a" stroke="#3c1a10" stroke-width=".9"/><rect x="7" y="3" width="5.200" height="2.500" fill="#c4746a" stroke="#3c1a10" stroke-width=".9"/><rect x=".7" y="5.500" width="4.200" height="2.500" fill="#c4746a" stroke="#3c1a10" stroke-width=".9"/><rect x="4.900" y="5.500" width="4.200" height="2.500" fill="#c4746a" stroke="#3c1a10" stroke-width=".9"/><rect x="9.100" y="5.500" width="4.200" height="2.500" fill="#c4746a" stroke="#3c1a10" stroke-width=".9"/></svg></div>
<div class="n c" style="left:118px;top:378.292px;width:73px;height:16.437px;">0.001312</div>
<div class="c" style="left:195px;top:378.292px;width:52px;height:16.437px;">т</div>
<div class="c" style="left:249.5px;top:378.292px;width:150.5px;height:16.437px;">Лаки канифольные КФ-965</div>
<div class="n c" style="left:400px;top:378.292px;width:80px;height:16.437px;">185664.95</div>
<div class="n c" style="left:484px;top:378.292px;width:80px;height:16.437px;">243.59</div>
<div class="n c" style="left:568px;top:378.292px;width:80px;height:16.437px;">70200.00</div>
<div class="n c" style="left:652px;top:378.292px;width:80px;height:16.437px;">92.10</div>
<div class="c" style="left:736px;top:378.292px;width:32px;height:16.437px;text-align:center">М</div>
<div class="n c" style="left:768px;top:378.292px;width:52px;height:16.437px;">2.6448</div>
<div class="n c" style="left:891px;top:378.292px;width:64px;height:16.437px;">62123.89</div>
<div class="n c" style="left:1258px;top:378.292px;width:56px;height:16.437px;">1260</div>
<div style="left:0px;top:394.529px;width:117.3px;height:16.837px;background:#b6dcbe;color:#2c3430;padding-left:.7px;line-height:19.437px"><span class="k">С101-0813</span><svg width="13" height="8.400" viewBox="0 0 14 9" style="position:absolute;left:102.200px;top:4.400px"><rect x="4" y=".5" width="5.800" height="2.500" fill="#c4746a" stroke="#3c1a10" stroke-width=".9"/><rect x="1.800" y="3" width="5.200" height="2.500" fill="#c4746a" stroke="#3c1a10" stroke-width=".9"/><rect x="7" y="3" width="5.200" height="2.500" fill="#c4746a" stroke="#3c1a10" stroke-width=".9"/><rect x=".7" y="5.500" width="4.200" height="2.500" fill="#c4746a" stroke="#3c1a10" stroke-width=".9"/><rect x="4.900" y="5.500" width="4.200" height="2.500" fill="#c4746a" stroke="#3c1a10" stroke-width=".9"/><rect x="9.100" y="5.500" width="4.200" height="2.500" fill="#c4746a" stroke="#3c1a10" stroke-width=".9"/></svg></div>
<div class="n c" style="left:118px;top:394.729px;width:73px;height:16.437px;">0.0054</div>
<div class="c" style="left:195px;top:394.729px;width:52px;height:16.437px;">т</div>
<div class="c" style="left:249.5px;top:394.729px;width:150.5px;height:16.437px;">Проволока стальная низко...</div>
<div class="n c" style="left:400px;top:394.729px;width:80px;height:16.437px;">23914.00</div>
<div class="n c" style="left:484px;top:394.729px;width:80px;height:16.437px;">129.14</div>
<div class="n c" style="left:568px;top:394.729px;width:80px;height:16.437px;">12242.00</div>
<div class="n c" style="left:652px;top:394.729px;width:80px;height:16.437px;">66.11</div>
<div class="c" style="left:736px;top:394.729px;width:32px;height:16.437px;text-align:center">М</div>
<div class="n c" style="left:768px;top:394.729px;width:52px;height:16.437px;">1.953439</div>
<div class="n c" style="left:891px;top:394.729px;width:64px;height:16.437px;">10833.63</div>
<div class="n c" style="left:1258px;top:394.729px;width:56px;height:16.437px;">1000</div>
<div style="left:0px;top:410.966px;width:117.3px;height:16.837px;background:#b6dcbe;color:#2c3430;padding-left:.7px;line-height:19.437px"><span class="k">С101-0838</span><svg width="13" height="8.400" viewBox="0 0 14 9" style="position:absolute;left:102.200px;top:4.400px"><rect x="4" y=".5" width="5.800" height="2.500" fill="#c4746a" stroke="#3c1a10" stroke-width=".9"/><rect x="1.800" y="3" width="5.200" height="2.500" fill="#c4746a" stroke="#3c1a10" stroke-width=".9"/><rect x="7" y="3" width="5.200" height="2.500" fill="#c4746a" stroke="#3c1a10" stroke-width=".9"/><rect x=".7" y="5.500" width="4.200" height="2.500" fill="#c4746a" stroke="#3c1a10" stroke-width=".9"/><rect x="4.900" y="5.500" width="4.200" height="2.500" fill="#c4746a" stroke="#3c1a10" stroke-width=".9"/><rect x="9.100" y="5.500" width="4.200" height="2.500" fill="#c4746a" stroke="#3c1a10" stroke-width=".9"/></svg></div>
<div class="n c" style="left:118px;top:411.166px;width:73px;height:16.437px;">0.00002</div>
<div class="c" style="left:195px;top:411.166px;width:52px;height:16.437px;">т</div>
<div class="c" style="left:249.5px;top:411.166px;width:150.5px;height:16.437px;">Растворители для лакокра...</div>
<div class="n c" style="left:400px;top:411.166px;width:80px;height:16.437px;">60000.00</div>
<div class="n c" style="left:484px;top:411.166px;width:80px;height:16.437px;">1.20</div>
<div class="n c" style="left:568px;top:411.166px;width:80px;height:16.437px;">7300.00</div>
<div class="n c" style="left:652px;top:411.166px;width:80px;height:16.437px;">0.15</div>
<div class="c" style="left:736px;top:411.166px;width:32px;height:16.437px;text-align:center">М</div>
<div class="n c" style="left:768px;top:411.166px;width:52px;height:16.437px;">8.219178</div>
<div class="n c" style="left:891px;top:411.166px;width:64px;height:16.437px;">6460.18</div>
<div class="n c" style="left:1258px;top:411.166px;width:56px;height:16.437px;">1260</div>
<div style="left:0px;top:427.403px;width:117.3px;height:16.837px;background:#b6dcbe;color:#2c3430;padding-left:.7px;line-height:19.437px"><span class="k">С101-0865</span><svg width="13" height="8.400" viewBox="0 0 14 9" style="position:absolute;left:102.200px;top:4.400px"><rect x="4" y=".5" width="5.800" height="2.500" fill="#c4746a" stroke="#3c1a10" stroke-width=".9"/><rect x="1.800" y="3" width="5.200" height="2.500" fill="#c4746a" stroke="#3c1a10" stroke-width=".9"/><rect x="7" y="3" width="5.200" height="2.500" fill="#c4746a" stroke="#3c1a10" stroke-width=".9"/><rect x=".7" y="5.500" width="4.200" height="2.500" fill="#c4746a" stroke="#3c1a10" stroke-width=".9"/><rect x="4.900" y="5.500" width="4.200" height="2.500" fill="#c4746a" stroke="#3c1a10" stroke-width=".9"/><rect x="9.100" y="5.500" width="4.200" height="2.500" fill="#c4746a" stroke="#3c1a10" stroke-width=".9"/></svg></div>
<div class="n c" style="left:118px;top:427.603px;width:73px;height:16.437px;">0.108</div>
<div class="c" style="left:195px;top:427.603px;width:52px;height:16.437px;">т</div>
<div class="c" style="left:249.5px;top:427.603px;width:150.5px;height:16.437px;"><span class="k" style="transform:scaleX(0.9765)">Роли свинцовые марки С1 т...</span></div>
<div style="left:399.5px;top:427.603px;width:84px;height:16.437px;background:#fcfc14"></div>
<div class="n c" style="left:568px;top:427.603px;width:80px;height:16.437px;">40600.00</div>
<div class="n c" style="left:652px;top:427.603px;width:80px;height:16.437px;">4384.80</div>
<div class="c" style="left:736px;top:427.603px;width:32px;height:16.437px;text-align:center">М</div>
<div class="n c" style="left:891px;top:427.603px;width:64px;height:16.437px;">35929.20</div>
<div class="n c" style="left:1258px;top:427.603px;width:56px;height:16.437px;">1000</div>
<div style="left:0px;top:443.84px;width:117.3px;height:16.837px;background:#b6dcbe;color:#2c3430;padding-left:.7px;line-height:19.437px"><span class="k">С101-1292</span><svg width="13" height="8.400" viewBox="0 0 14 9" style="position:absolute;left:102.200px;top:4.400px"><rect x="4" y=".5" width="5.800" height="2.500" fill="#c4746a" stroke="#3c1a10" stroke-width=".9"/><rect x="1.800" y="3" width="5.200" height="2.500" fill="#c4746a" stroke="#3c1a10" stroke-width=".9"/><rect x="7" y="3" width="5.200" height="2.500" fill="#c4746a" stroke="#3c1a10" stroke-width=".9"/><rect x=".7" y="5.500" width="4.200" height="2.500" fill="#c4746a" stroke="#3c1a10" stroke-width=".9"/><rect x="4.900" y="5.500" width="4.200" height="2.500" fill="#c4746a" stroke="#3c1a10" stroke-width=".9"/><rect x="9.100" y="5.500" width="4.200" height="2.500" fill="#c4746a" stroke="#3c1a10" stroke-width=".9"/></svg></div>
<div class="n c" style="left:118px;top:444.04px;width:73px;height:16.437px;">0.00002</div>
<div class="c" style="left:195px;top:444.04px;width:52px;height:16.437px;">т</div>
<div class="c" style="left:249.5px;top:444.04px;width:150.5px;height:16.437px;">Уайт-спирит</div>
<div class="n c" style="left:400px;top:444.04px;width:80px;height:16.437px;">58000.00</div>
<div class="n c" style="left:484px;top:444.04px;width:80px;height:16.437px;">1.16</div>
<div class="n c" style="left:568px;top:444.04px;width:80px;height:16.437px;">6667.00</div>
<div class="n c" style="left:652px;top:444.04px;width:80px;height:16.437px;">0.13</div>
<div class="c" style="left:736px;top:444.04px;width:32px;height:16.437px;text-align:center">М</div>
<div class="n c" style="left:768px;top:444.04px;width:52px;height:16.437px;">8.699565</div>
<div class="n c" style="left:891px;top:444.04px;width:64px;height:16.437px;">5900.00</div>
<div class="n c" style="left:1258px;top:444.04px;width:56px;height:16.437px;">1350</div>
<div style="left:0px;top:460.277px;width:117.3px;height:16.837px;background:#b6dcbe;color:#2c3430;padding-left:.7px;line-height:19.437px"><span class="k">С101-1513</span><svg width="13" height="8.400" viewBox="0 0 14 9" style="position:absolute;left:102.200px;top:4.400px"><rect x="4" y=".5" width="5.800" height="2.500" fill="#c4746a" stroke="#3c1a10" stroke-width=".9"/><rect x="1.800" y="3" width="5.200" height="2.500" fill="#c4746a" stroke="#3c1a10" stroke-width=".9"/><rect x="7" y="3" width="5.200" height="2.500" fill="#c4746a" stroke="#3c1a10" stroke-width=".9"/><rect x=".7" y="5.500" width="4.200" height="2.500" fill="#c4746a" stroke="#3c1a10" stroke-width=".9"/><rect x="4.900" y="5.500" width="4.200" height="2.500" fill="#c4746a" stroke="#3c1a10" stroke-width=".9"/><rect x="9.100" y="5.500" width="4.200" height="2.500" fill="#c4746a" stroke="#3c1a10" stroke-width=".9"/></svg></div>
<div class="n c" style="left:118px;top:460.477px;width:73px;height:16.437px;">0.00048</div>
<div class="c" style="left:195px;top:460.477px;width:52px;height:16.437px;">т</div>
<div class="c" style="left:249.5px;top:460.477px;width:150.5px;height:16.437px;"><span class="k" style="transform:scaleX(0.9464)">Электроды диаметром 4 мм ...</span></div>
<div class="n c" style="left:400px;top:460.477px;width:80px;height:16.437px;">34320.00</div>
<div class="n c" style="left:484px;top:460.477px;width:80px;height:16.437px;">16.47</div>
<div class="n c" style="left:568px;top:460.477px;width:80px;height:16.437px;">9750.00</div>
<div class="n c" style="left:652px;top:460.477px;width:80px;height:16.437px;">4.68</div>
<div class="c" style="left:736px;top:460.477px;width:32px;height:16.437px;text-align:center">М</div>
<div class="n c" style="left:768px;top:460.477px;width:52px;height:16.437px;">3.52</div>
<div class="n c" style="left:891px;top:460.477px;width:64px;height:16.437px;">8628.32</div>
<div class="n c" style="left:1258px;top:460.477px;width:56px;height:16.437px;">1140</div>
<div style="left:0px;top:476.714px;width:117.3px;height:16.837px;background:#b6dcbe;color:#2c3430;padding-left:.7px;line-height:19.437px"><span class="k">С101-1641</span><svg width="13" height="8.400" viewBox="0 0 14 9" style="position:absolute;left:102.200px;top:4.400px"><rect x="4" y=".5" width="5.800" height="2.500" fill="#c4746a" stroke="#3c1a10" stroke-width=".9"/><rect x="1.800" y="3" width="5.200" height="2.500" fill="#c4746a" stroke="#3c1a10" stroke-width=".9"/><rect x="7" y="3" width="5.200" height="2.500" fill="#c4746a" stroke="#3c1a10" stroke-width=".9"/><rect x=".7" y="5.500" width="4.200" height="2.500" fill="#c4746a" stroke="#3c1a10" stroke-width=".9"/><rect x="4.900" y="5.500" width="4.200" height="2.500" fill="#c4746a" stroke="#3c1a10" stroke-width=".9"/><rect x="9.100" y="5.500" width="4.200" height="2.500" fill="#c4746a" stroke="#3c1a10" stroke-width=".9"/></svg></div>
<div class="n c" style="left:118px;top:476.914px;width:73px;height:16.437px;">1.227</div>
<div class="c" style="left:195px;top:476.914px;width:52px;height:16.437px;">т</div>
<div class="c" style="left:249.5px;top:476.914px;width:150.5px;height:16.437px;"><span class="k" style="transform:scaleX(0.9870)">Сталь угловая, равнополоч...</span></div>
<div style="left:399.5px;top:476.914px;width:84px;height:16.437px;background:#fcfc14"></div>
<div class="n c" style="left:568px;top:476.914px;width:80px;height:16.437px;">5763.00</div>
<div class="n c" style="left:652px;top:476.914px;width:80px;height:16.437px;">7071.20</div>
<div class="c" style="left:736px;top:476.914px;width:32px;height:16.437px;text-align:center">М</div>
<div class="n c" style="left:891px;top:476.914px;width:64px;height:16.437px;">5100.00</div>
<div class="n c" style="left:1258px;top:476.914px;width:56px;height:16.437px;">1000</div>
<div style="left:0px;top:493.151px;width:117.3px;height:16.837px;background:#b6dcbe;color:#2c3430;padding-left:.7px;line-height:19.437px"><span class="k">С101-1742</span><svg width="13" height="8.400" viewBox="0 0 14 9" style="position:absolute;left:102.200px;top:4.400px"><rect x="4" y=".5" width="5.800" height="2.500" fill="#c4746a" stroke="#3c1a10" stroke-width=".9"/><rect x="1.800" y="3" width="5.200" height="2.500" fill="#c4746a" stroke="#3c1a10" stroke-width=".9"/><rect x="7" y="3" width="5.200" height="2.500" fill="#c4746a" stroke="#3c1a10" stroke-width=".9"/><rect x=".7" y="5.500" width="4.200" height="2.500" fill="#c4746a" stroke="#3c1a10" stroke-width=".9"/><rect x="4.900" y="5.500" width="4.200" height="2.500" fill="#c4746a" stroke="#3c1a10" stroke-width=".9"/><rect x="9.100" y="5.500" width="4.200" height="2.500" fill="#c4746a" stroke="#3c1a10" stroke-width=".9"/></svg></div>
<div class="n c" style="left:118px;top:493.351px;width:73px;height:16.437px;">0.1968</div>
<div class="c" style="left:195px;top:493.351px;width:52px;height:16.437px;">м2</div>
<div class="c" style="left:249.5px;top:493.351px;width:150.5px;height:16.437px;">Толь с крупнозернистой по...</div>
<div style="left:399.5px;top:493.351px;width:84px;height:16.437px;background:#fcfc14"></div>
<div class="n c" style="left:568px;top:493.351px;width:80px;height:16.437px;">5.71</div>
<div class="n c" style="left:652px;top:493.351px;width:80px;height:16.437px;">1.12</div>
<div class="c" style="left:736px;top:493.351px;width:32px;height:16.437px;text-align:center">М</div>
<div class="n c" style="left:891px;top:493.351px;width:64px;height:16.437px;">5.05</div>
<div class="n c" style="left:1258px;top:493.351px;width:56px;height:16.437px;">0.7</div>
<div style="left:0px;top:509.588px;width:117.3px;height:16.837px;background:#b6dcbe;color:#2c3430;padding-left:.7px;line-height:19.437px"><span class="k">С101-1755</span><svg width="13" height="8.400" viewBox="0 0 14 9" style="position:absolute;left:102.200px;top:4.400px"><rect x="4" y=".5" width="5.800" height="2.500" fill="#c4746a" stroke="#3c1a10" stroke-width=".9"/><rect x="1.800" y="3" width="5.200" height="2.500" fill="#c4746a" stroke="#3c1a10" stroke-width=".9"/><rect x="7" y="3" width="5.200" height="2.500" fill="#c4746a" stroke="#3c1a10" stroke-width=".9"/><rect x=".7" y="5.500" width="4.200" height="2.500" fill="#c4746a" stroke="#3c1a10" stroke-width=".9"/><rect x="4.900" y="5.500" width="4.200" height="2.500" fill="#c4746a" stroke="#3c1a10" stroke-width=".9"/><rect x="9.100" y="5.500" width="4.200" height="2.500" fill="#c4746a" stroke="#3c1a10" stroke-width=".9"/></svg></div>
<div class="n c" style="left:118px;top:509.788px;width:73px;height:16.437px;">0.1227</div>
<div class="c" style="left:195px;top:509.788px;width:52px;height:16.437px;">т</div>
<div class="c" style="left:249.5px;top:509.788px;width:150.5px;height:16.437px;">Сталь полосовая спокойна...</div>
<div class="n c" style="left:400px;top:509.788px;width:80px;height:16.437px;">20000.00</div>
<div class="n c" style="left:484px;top:509.788px;width:80px;height:16.437px;">2454.00</div>
<div class="n c" style="left:568px;top:509.788px;width:80px;height:16.437px;">5000.00</div>
<div class="n c" style="left:652px;top:509.788px;width:80px;height:16.437px;">613.50</div>
<div class="c" style="left:736px;top:509.788px;width:32px;height:16.437px;text-align:center">М</div>
<div class="n c" style="left:768px;top:509.788px;width:52px;height:16.437px;">4.0</div>
<div class="n c" style="left:891px;top:509.788px;width:64px;height:16.437px;">4424.78</div>
<div class="n c" style="left:1258px;top:509.788px;width:56px;height:16.437px;">1000</div>
<div style="left:0px;top:526.025px;width:117.3px;height:16.837px;background:#b6dcbe;color:#2c3430;padding-left:.7px;line-height:19.437px"><span class="k">С101-1759</span><svg width="13" height="8.400" viewBox="0 0 14 9" style="position:absolute;left:102.200px;top:4.400px"><rect x="4" y=".5" width="5.800" height="2.500" fill="#c4746a" stroke="#3c1a10" stroke-width=".9"/><rect x="1.800" y="3" width="5.200" height="2.500" fill="#c4746a" stroke="#3c1a10" stroke-width=".9"/><rect x="7" y="3" width="5.200" height="2.500" fill="#c4746a" stroke="#3c1a10" stroke-width=".9"/><rect x=".7" y="5.500" width="4.200" height="2.500" fill="#c4746a" stroke="#3c1a10" stroke-width=".9"/><rect x="4.900" y="5.500" width="4.200" height="2.500" fill="#c4746a" stroke="#3c1a10" stroke-width=".9"/><rect x="9.100" y="5.500" width="4.200" height="2.500" fill="#c4746a" stroke="#3c1a10" stroke-width=".9"/></svg></div>
<div class="n c" style="left:118px;top:526.225px;width:73px;height:16.437px;">82</div>
<div class="c" style="left:195px;top:526.225px;width:52px;height:16.437px;">л</div>
<div class="c" style="left:249.5px;top:526.225px;width:150.5px;height:16.437px;"><span class="k" style="transform:scaleX(0.9752)">Герметик силиконовый для ...</span></div>
<div class="n c" style="left:400px;top:526.225px;width:80px;height:16.437px;">114.00</div>
<div class="n c" style="left:484px;top:526.225px;width:80px;height:16.437px;">9348.00</div>
<div class="n c" style="left:568px;top:526.225px;width:80px;height:16.437px;">76.80</div>
<div class="n c" style="left:652px;top:526.225px;width:80px;height:16.437px;">6297.60</div>
<div class="c" style="left:736px;top:526.225px;width:32px;height:16.437px;text-align:center">М</div>
<div class="n c" style="left:768px;top:526.225px;width:52px;height:16.437px;">1.484375</div>
<div class="n c" style="left:1258px;top:526.225px;width:56px;height:16.437px;">1</div>
<div style="left:0px;top:542.462px;width:117.3px;height:16.837px;background:#b6dcbe;color:#2c3430;padding-left:.7px;line-height:19.437px"><span class="k">С101-1786-П</span><svg width="13" height="8.400" viewBox="0 0 14 9" style="position:absolute;left:102.200px;top:4.400px"><rect x="4" y=".5" width="5.800" height="2.500" fill="#c4746a" stroke="#3c1a10" stroke-width=".9"/><rect x="1.800" y="3" width="5.200" height="2.500" fill="#c4746a" stroke="#3c1a10" stroke-width=".9"/><rect x="7" y="3" width="5.200" height="2.500" fill="#c4746a" stroke="#3c1a10" stroke-width=".9"/><rect x=".7" y="5.500" width="4.200" height="2.500" fill="#c4746a" stroke="#3c1a10" stroke-width=".9"/><rect x="4.900" y="5.500" width="4.200" height="2.500" fill="#c4746a" stroke="#3c1a10" stroke-width=".9"/><rect x="9.100" y="5.500" width="4.200" height="2.500" fill="#c4746a" stroke="#3c1a10" stroke-width=".9"/></svg></div>
<div class="n c" style="left:118px;top:542.662px;width:73px;height:16.437px;">0.0081</div>
<div class="c" style="left:195px;top:542.662px;width:52px;height:16.437px;">т</div>
<div class="c" style="left:249.5px;top:542.662px;width:150.5px;height:16.437px;">Лак битумный БТ-123</div>
<div class="n c" style="left:400px;top:542.662px;width:80px;height:16.437px;">38110.38</div>
<div class="n c" style="left:484px;top:542.662px;width:80px;height:16.437px;">308.69</div>
<div class="n c" style="left:568px;top:542.662px;width:80px;height:16.437px;">9073.90</div>
<div class="n c" style="left:652px;top:542.662px;width:80px;height:16.437px;">73.50</div>
<div class="c" style="left:736px;top:542.662px;width:32px;height:16.437px;text-align:center">М</div>
<div class="n c" style="left:768px;top:542.662px;width:52px;height:16.437px;">4.2</div>
<div class="n c" style="left:1258px;top:542.662px;width:56px;height:16.437px;">1300</div>
<div style="left:0px;top:558.899px;width:117.3px;height:16.837px;background:#b6dcbe;color:#2c3430;padding-left:.7px;line-height:19.437px"><span class="k">С101-1805</span><svg width="13" height="8.400" viewBox="0 0 14 9" style="position:absolute;left:102.200px;top:4.400px"><rect x="4" y=".5" width="5.800" height="2.500" fill="#c4746a" stroke="#3c1a10" stroke-width=".9"/><rect x="1.800" y="3" width="5.200" height="2.500" fill="#c4746a" stroke="#3c1a10" stroke-width=".9"/><rect x="7" y="3" width="5.200" height="2.500" fill="#c4746a" stroke="#3c1a10" stroke-width=".9"/><rect x=".7" y="5.500" width="4.200" height="2.500" fill="#c4746a" stroke="#3c1a10" stroke-width=".9"/><rect x="4.900" y="5.500" width="4.200" height="2.500" fill="#c4746a" stroke="#3c1a10" stroke-width=".9"/><rect x="9.100" y="5.500" width="4.200" height="2.500" fill="#c4746a" stroke="#3c1a10" stroke-width=".9"/></svg></div>
<div class="n c" style="left:118px;top:559.099px;width:73px;height:16.437px;">0.0008</div>
<div class="c" style="left:195px;top:559.099px;width:52px;height:16.437px;">т</div>
<div class="c" style="left:249.5px;top:559.099px;width:150.5px;height:16.437px;">Гвозди строительные</div>
<div class="n c" style="left:400px;top:559.099px;width:80px;height:16.437px;">50427.38</div>
<div class="n c" style="left:484px;top:559.099px;width:80px;height:16.437px;">40.34</div>
<div class="n c" style="left:568px;top:559.099px;width:80px;height:16.437px;">11978.00</div>
<div class="n c" style="left:652px;top:559.099px;width:80px;height:16.437px;">9.58</div>
<div class="c" style="left:736px;top:559.099px;width:32px;height:16.437px;text-align:center">М</div>
<div class="n c" style="left:768px;top:559.099px;width:52px;height:16.437px;">4.21</div>
<div class="n c" style="left:891px;top:559.099px;width:64px;height:16.437px;">10600.00</div>
<div class="n c" style="left:1258px;top:559.099px;width:56px;height:16.437px;">1110</div>
<div style="left:0px;top:575.336px;width:117.3px;height:16.837px;background:#b6dcbe;color:#2c3430;padding-left:.7px;line-height:19.437px"><span class="k">С101-1924</span><svg width="13" height="8.400" viewBox="0 0 14 9" style="position:absolute;left:102.200px;top:4.400px"><rect x="4" y=".5" width="5.800" height="2.500" fill="#c4746a" stroke="#3c1a10" stroke-width=".9"/><rect x="1.800" y="3" width="5.200" height="2.500" fill="#c4746a" stroke="#3c1a10" stroke-width=".9"/><rect x="7" y="3" width="5.200" height="2.500" fill="#c4746a" stroke="#3c1a10" stroke-width=".9"/><rect x=".7" y="5.500" width="4.200" height="2.500" fill="#c4746a" stroke="#3c1a10" stroke-width=".9"/><rect x="4.900" y="5.500" width="4.200" height="2.500" fill="#c4746a" stroke="#3c1a10" stroke-width=".9"/><rect x="9.100" y="5.500" width="4.200" height="2.500" fill="#c4746a" stroke="#3c1a10" stroke-width=".9"/></svg></div>
<div class="n c" style="left:118px;top:575.536px;width:73px;height:16.437px;">5.74</div>
<div class="c" style="left:195px;top:575.536px;width:52px;height:16.437px;">кг</div>
<div class="c" style="left:249.5px;top:575.536px;width:150.5px;height:16.437px;"><span class="k" style="transform:scaleX(0.9464)">Электроды диаметром 4 мм ...</span></div>
<div class="n c" style="left:400px;top:575.536px;width:80px;height:16.437px;">34.32</div>
<div class="n c" style="left:484px;top:575.536px;width:80px;height:16.437px;">197.00</div>
<div class="n c" style="left:568px;top:575.536px;width:80px;height:16.437px;">14.30</div>
<div class="n c" style="left:652px;top:575.536px;width:80px;height:16.437px;">82.08</div>
<div class="c" style="left:736px;top:575.536px;width:32px;height:16.437px;text-align:center">М</div>
<div class="n c" style="left:768px;top:575.536px;width:52px;height:16.437px;">2.4</div>
<div class="n c" style="left:891px;top:575.536px;width:64px;height:16.437px;">12.65</div>
<div class="n c" style="left:1258px;top:575.536px;width:56px;height:16.437px;">1</div>
<div style="left:0px;top:591.773px;width:117.3px;height:16.837px;background:#b6dcbe;color:#2c3430;padding-left:.7px;line-height:19.437px"><span class="k">С101-1964</span><svg width="13" height="8.400" viewBox="0 0 14 9" style="position:absolute;left:102.200px;top:4.400px"><rect x="4" y=".5" width="5.800" height="2.500" fill="#c4746a" stroke="#3c1a10" stroke-width=".9"/><rect x="1.800" y="3" width="5.200" height="2.500" fill="#c4746a" stroke="#3c1a10" stroke-width=".9"/><rect x="7" y="3" width="5.200" height="2.500" fill="#c4746a" stroke="#3c1a10" stroke-width=".9"/><rect x=".7" y="5.500" width="4.200" height="2.500" fill="#c4746a" stroke="#3c1a10" stroke-width=".9"/><rect x="4.900" y="5.500" width="4.200" height="2.500" fill="#c4746a" stroke="#3c1a10" stroke-width=".9"/><rect x="9.100" y="5.500" width="4.200" height="2.500" fill="#c4746a" stroke="#3c1a10" stroke-width=".9"/></svg></div>
<div class="n c" style="left:118px;top:591.973px;width:73px;height:16.437px;">0.6724</div>
<div class="c" style="left:195px;top:591.973px;width:52px;height:16.437px;">кг</div>
<div class="c" style="left:249.5px;top:591.973px;width:150.5px;height:16.437px;">Шпагат бумажный</div>
<div class="n c" style="left:400px;top:591.973px;width:80px;height:16.437px;">75.60</div>
<div class="n c" style="left:484px;top:591.973px;width:80px;height:16.437px;">50.83</div>
<div class="n c" style="left:568px;top:591.973px;width:80px;height:16.437px;">18.90</div>
<div class="n c" style="left:652px;top:591.973px;width:80px;height:16.437px;">12.71</div>
<div class="c" style="left:736px;top:591.973px;width:32px;height:16.437px;text-align:center">М</div>
<div class="n c" style="left:768px;top:591.973px;width:52px;height:16.437px;">4.0</div>
<div class="n c" style="left:891px;top:591.973px;width:64px;height:16.437px;">16.73</div>
<div class="n c" style="left:1258px;top:591.973px;width:56px;height:16.437px;">1.13</div>
<div style="left:0px;top:114.8px;width:1359px;height:1.1px;background:#1c2c2c"></div>
<svg style="position:absolute;left:0;top:0" width="1500" height="819" viewBox="0 0 1500 819" fill="none" stroke-linejoin="round"><path d="M1.500 346 Q1 344.800 6 344.600 L52 344.300 Q58 344.500 59.500 349 L59.800 356 Q58 359 52 360.500 Q45 362.500 33 362 Q20 361.500 6 360.300 Q1.500 359.500 1.300 356 Z" stroke="#3a3040" stroke-width="1"/><path d="M415 354 Q416 348 424 346.800 Q450 345.500 478 346.800 Q484.500 348 484.800 353 Q484.500 359 478 360.500 Q470 362.800 465 362 Q440 362.500 424 361 Q415.500 359.500 415 354Z" fill="#a9a9a9" stroke="#3c3c3c" stroke-width="1"/><path d="M501.500 357 L501.200 353 Q503 349 509 346 Q514 343 519 342.500 L515.500 342 L524 341.500 Q527 343.500 530 344 Q540 345 548 347 L567 347.500 L567.500 358 L564.500 358.500 L563.500 361.500 L561 359 Q545 359 526 357.800 Z" fill="#dddddd" stroke="#3c3c3c" stroke-width="1"/></svg>
<div style="left:0px;top:608.6px;width:1359px;height:16px;background:#f7f7f7;border-top:1px solid #d0d0d0"></div>
<div style="left:0px;top:609.6px;width:12px;height:14px;border:1px solid #b4b4b4;border-radius:2px;background:linear-gradient(#fbfbfb,#e4e4e4)"><svg width="10" height="12" viewBox="0 0 12 12" preserveAspectRatio="none" style="position:absolute;left:0;top:0"><path d="M7.500 2.500L3.500 6l4 3.500" fill="none" stroke="#3a3a3a" stroke-width="1.6"/></svg></div>
<div style="left:12.5px;top:609.6px;width:13px;height:14px;border:1px solid #b4b4b4;border-radius:2px;background:linear-gradient(#fbfbfb,#e4e4e4)"><svg width="11" height="12" viewBox="0 0 12 12" preserveAspectRatio="none" style="position:absolute;left:0;top:0"><path d="M4 3.500v5M6 3.500v5M8 3.500v5" fill="none" stroke="#999" stroke-width="1"/></svg></div>
<div style="left:1345px;top:609.6px;width:13.5px;height:14px;border:1px solid #b4b4b4;border-radius:2px;background:linear-gradient(#fbfbfb,#e4e4e4)"><svg width="11.5" height="12" viewBox="0 0 12 12" preserveAspectRatio="none" style="position:absolute;left:0;top:0"><path d="M4.500 2.500L8.500 6l-4 3.500" fill="none" stroke="#3a3a3a" stroke-width="1.6"/></svg></div>
<div style="left:1359px;top:58px;width:14px;height:567px;background:#f3f3f3;border-left:1px solid #e0e0e0"></div>
<div class="btn" style="left:1360px;top:58.5px;width:12.5px;height:12.5px;"><svg width="10" height="10" viewBox="0 0 10 10" style="position:absolute;left:0;top:0"><path d="M2 6.800L5 3.200l3 3.600z" fill="#111"/></svg></div>
<div class="btn" style="left:1360px;top:610.5px;width:12.5px;height:13px;"><svg width="10" height="10" viewBox="0 0 10 10" style="position:absolute;left:0;top:.5px"><path d="M2 3.500L5 7.100l3-3.600z" fill="#111"/></svg></div>
<div class="btn" style="left:1360px;top:210px;width:12.5px;height:12px;"></div>
<div style="left:1373px;top:58px;width:127px;height:567px;background:#e9e9e9;border-left:1px solid #b8b8b8"></div>
<div style="left:1375.5px;top:58.7px;width:125px;height:11.3px;background:#000084"></div>
<div style="left:1376px;top:59.3px;width:9.5px;height:10px;background:#e4e4ee;border:1px solid #8c8cc0"><svg width="8" height="8" viewBox="0 0 8 8" style="position:absolute;left:0;top:0"><path d="M1.800 1.800l4.200 4.200M6 1.800L1.800 6" stroke="#222" stroke-width=".9" fill="none"/></svg></div>
<div style="left:1376px;top:72px;width:38.5px;height:15.5px;background:#ededed;border:1px solid #fcfcfc;border-right:1px solid #8e8e8e;border-bottom:0;font-size:8.500px;line-height:13px;text-align:center;color:#2a2a2a">Нормы</div>
<div style="left:1415px;top:74px;width:31.5px;height:12.5px;border-right:1px solid #8e8e8e;border-top:1px solid #f8f8f8;font-size:8.500px;line-height:12px;text-align:center;color:#2a2a2a">% РР</div>
<div style="left:1378px;top:87.4px;width:120px;height:448.4px;background:#bfbfbf"></div>
<div style="left:1378px;top:88.5px;width:25.8px;height:12.5px;background:#a9cdf1;border-right:1px solid #3a3a3a;border-bottom:1px solid #3a3a3a;font-weight:bold;font-size:8.600px;line-height:12px;text-align:center;color:#141c28">№</div>
<div style="left:1403.8px;top:88.5px;width:83px;height:12.5px;background:#a9cdf1;border-right:1px solid #3a3a3a;border-bottom:1px solid #3a3a3a;font-weight:bold;font-size:8.600px;line-height:12px;text-align:center;color:#141c28">Шифр</div>
<div style="left:1378px;top:101px;width:25.8px;height:13.5px;background:#cacaca;border-right:1px solid #9c9c9c;border-bottom:1px solid #9c9c9c;font-size:9px;line-height:13.500px;color:#2a2a2a;text-align:center"><span class="k" style="transform-origin:50% 50%">30</span></div>
<div style="left:1403.8px;top:101px;width:83px;height:13.5px;background:#cacaca;border-right:1px solid #9c9c9c;border-bottom:1px solid #9c9c9c;font-size:9px;line-height:13.500px;color:#2a2a2a;padding-left:1.500px"><span class="k">П115.</span></div>
<div style="left:1378px;top:537px;width:41px;height:15.5px;background:#ededed;border:1px solid #fcfcfc;border-right:1px solid #8e8e8e;border-bottom:0;font-size:8.500px;line-height:13px;text-align:center;color:#2a2a2a">Наим-е</div>
<div style="left:1419px;top:539px;width:36px;height:12.5px;border-right:1px solid #8e8e8e;border-top:1px solid #f8f8f8;font-size:8.500px;line-height:12px;text-align:center;color:#2a2a2a">Арх. №</div>
<div style="left:1378px;top:552px;width:120px;height:71px;background:#e9e9e9;border:1px solid #fcfcfc;border-right-color:#a0a0a0;border-bottom-color:#a0a0a0"></div>
<div style="left:1381.5px;top:556.3px;width:112px;height:61.5px;background:#fffbf0;border:1px solid #a4a4a4;border-right-color:#fcfcfc;border-bottom-color:#fcfcfc;white-space:normal;font-size:8.650px;line-height:10.800px;padding:1.500px 0 0 1.500px;color:#1c1c1c">Контрольное<br>устройство</div>
<div style="left:1480px;top:557.3px;width:12.5px;height:59.5px;background:#f6f4ea"></div>
<svg style="position:absolute;left:1480px;top:557px" width="13" height="60" viewBox="0 0 13 60" fill="none" stroke="#c8c8c8" stroke-width="1.300"><path d="M3.500 8.500l3-3 3 3M3.500 51.500l3 3 3-3"/></svg>
<div style="left:0px;top:624.6px;width:1500px;height:1.2px;background:#a9a9a9"></div>
<div style="left:0px;top:625.8px;width:1500px;height:22.4px;background:#e5e5e5"></div>
<div style="left:0px;top:629px;width:85.5px;height:16px;border-right:1px solid #8e8e8e;font-size:10.95px;line-height:18px;padding-left:4px;color:#2a2a2a;overflow:visible">Наименование</div>
<div style="left:87px;top:629px;width:230.5px;height:16px;border-right:1px solid transparent;font-size:10.95px;line-height:18px;padding-left:21px;color:#2a2a2a;overflow:visible"><svg width="10" height="13" viewBox="0 0 10 13" style="position:absolute;left:6px;top:1px"><path d="M3.6 0h2.8v6.5h3.1L5 12.6.5 6.5h3.1z" fill="#c2121c"/></svg>Концовка ресурсного расчета (для РСР)</div>
<div style="left:318px;top:627px;width:251.5px;height:21.5px;background:#f1f1f1;border-left:1px solid #fcfcfc;border-top:1px solid #fcfcfc;border-right:1px solid #8a8a8a;font-size:10.9px;line-height:17.5px;padding-left:4.5px;color:#1c1c1c">Концовка локальной сметы (остальные формы)</div>
<div style="left:570px;top:629px;width:95.5px;height:16px;border-right:1px solid #8e8e8e;font-size:10.95px;line-height:18px;padding-left:5px;color:#2a2a2a;overflow:visible">Локальная смета</div>
<div style="left:0px;top:648px;width:1497.5px;height:110.5px;background:#fff;border-top:1px solid #a0a0a0;border-bottom:1px solid #c8c8c8;border-right:1px solid #b4b4b4"></div>
<div style="left:0px;top:649px;width:16px;height:108.5px;background:#e9e9e9;border-left:3px solid #d4d4d4"></div>
<div style="left:1483px;top:649px;width:13.8px;height:108.5px;background:#f4f4f4"></div>
<div style="left:1484.3px;top:651px;width:12.2px;height:11.5px;border-radius:2px;border:1px solid #b4b4b4;background:linear-gradient(#fcfcfc,#e2e2e2)"><svg width="10.200" height="9.5" viewBox="0 0 14 12" preserveAspectRatio="none" style="position:absolute;left:0;top:0"><path d="M3 8l4-4 4 4" fill="none" stroke="#444" stroke-width="1.500"/></svg></div>
<div style="left:1484.3px;top:722.5px;width:12.2px;height:11.5px;border-radius:2px;border:1px solid #b4b4b4;background:linear-gradient(#fcfcfc,#e2e2e2)"><svg width="10.200" height="9.5" viewBox="0 0 14 12" preserveAspectRatio="none" style="position:absolute;left:0;top:0"><path d="M3.500 4h7M3.500 6h7M3.500 8h7" fill="none" stroke="#aaa" stroke-width="1.500"/></svg></div>
<div style="left:1484.3px;top:742.7px;width:12.2px;height:12px;border-radius:2px;border:1px solid #b4b4b4;background:linear-gradient(#fcfcfc,#e2e2e2)"><svg width="10.200" height="10" viewBox="0 0 14 12" preserveAspectRatio="none" style="position:absolute;left:0;top:0"><path d="M3 4l4 4 4-4" fill="none" stroke="#444" stroke-width="1.500"/></svg></div>
<div style="left:16px;top:650.3px;width:191.7px;height:14.2px;background:#a9cdf1;border-right:1px solid #555;border-bottom:1px solid #555;text-align:center;font-size:9.4px;line-height:14.300px;color:#1c2430;overflow:visible"><span style="display:inline-block;transform:scaleX(0.9);transform-origin:50% 50%">Наименование</span></div>
<div style="left:207.7px;top:650.3px;width:79.9px;height:14.2px;background:#a9cdf1;border-right:1px solid #555;border-bottom:1px solid #555;text-align:center;font-size:9.4px;line-height:14.300px;color:#1c2430;overflow:visible"><span style="display:inline-block;transform:scaleX(0.9);transform-origin:50% 50%">Значение</span></div>
<div style="left:287.6px;top:650.3px;width:122px;height:14.2px;background:#a9cdf1;border-right:1px solid #555;border-bottom:1px solid #555;text-align:center;font-size:9.4px;line-height:14.300px;color:#1c2430;overflow:visible"><span style="display:inline-block;transform:scaleX(0.9);transform-origin:50% 50%">Общая ст-ть в баз. ценах</span></div>
<div style="left:409.6px;top:650.3px;width:118px;height:14.2px;background:#a9cdf1;border-right:1px solid #555;border-bottom:1px solid #555;text-align:center;font-size:9.4px;line-height:14.300px;color:#1c2430;overflow:visible"><span style="display:inline-block;transform:scaleX(0.9);transform-origin:50% 50%">Общая ст-ть в тек. ценах</span></div>
<div style="left:16px;top:664.4px;width:191.7px;height:14.85px;font-size:9.5px;line-height:15px;color:#1a1a1a;border-right:1px solid #d4d4d4;border-bottom:1px solid #d4d4d4;padding-left:2px"><span style="display:inline-block;transform:scaleX(0.91);transform-origin:0 50%">Стоимость механизмов, %</span></div>
<div style="left:207.7px;top:664.4px;width:79.9px;height:14.85px;font-size:9.5px;line-height:15px;color:#1a1a1a;border-right:1px solid #d4d4d4;border-bottom:1px solid #d4d4d4;text-align:center;"></div>
<div style="left:287.6px;top:664.4px;width:122px;height:14.85px;font-size:9.5px;line-height:15px;color:#1a1a1a;border-right:1px solid #d4d4d4;border-bottom:1px solid #d4d4d4;text-align:right;padding-right:2.5px"><span style="display:inline-block;transform:scaleX(0.9);transform-origin:100% 50%">94 373</span></div>
<div style="left:409.6px;top:664.4px;width:118px;height:14.85px;font-size:9.5px;line-height:15px;color:#1a1a1a;border-right:1px solid #d4d4d4;border-bottom:1px solid #d4d4d4;text-align:right;padding-right:2.5px;"><span style="display:inline-block;transform:scaleX(0.9);transform-origin:100% 50%">305 775</span></div>
<div style="left:16px;top:679.25px;width:191.7px;height:14.85px;font-size:9.5px;line-height:15px;color:#1a1a1a;border-right:1px solid #d4d4d4;border-bottom:1px solid #d4d4d4;padding-left:2px"><span style="display:inline-block;transform:scaleX(0.91);transform-origin:0 50%">ЭМ-ЗПМ</span></div>
<div style="left:207.7px;top:679.25px;width:79.9px;height:14.85px;font-size:9.5px;line-height:15px;color:#1a1a1a;border-right:1px solid #d4d4d4;border-bottom:1px solid #d4d4d4;text-align:center;"></div>
<div style="left:287.6px;top:679.25px;width:122px;height:14.85px;font-size:9.5px;line-height:15px;color:#1a1a1a;border-right:1px solid #d4d4d4;border-bottom:1px solid #d4d4d4;text-align:right;padding-right:2.5px"><span style="display:inline-block;transform:scaleX(0.9);transform-origin:100% 50%">85 674</span></div>
<div style="left:409.6px;top:679.25px;width:118px;height:14.85px;font-size:9.5px;line-height:15px;color:#1a1a1a;border-right:1px solid #d4d4d4;border-bottom:1px solid #d4d4d4;text-align:right;padding-right:2.5px;"><span style="display:inline-block;transform:scaleX(0.9);transform-origin:100% 50%">305 775</span></div>
<div style="left:16px;top:694.1px;width:191.7px;height:14.85px;font-size:9.5px;line-height:15px;color:#1a1a1a;border-right:1px solid #d4d4d4;border-bottom:1px solid #d4d4d4;padding-left:2px"><span style="display:inline-block;transform:scaleX(0.91);transform-origin:0 50%">- В ЭМ, %</span></div>
<div style="left:207.7px;top:694.1px;width:79.9px;height:14.85px;font-size:9.5px;line-height:15px;color:#1a1a1a;border-right:1px solid #d4d4d4;border-bottom:1px solid #d4d4d4;text-align:center;background:#c1e0c2;"><span style="display:inline-block;transform:scaleX(0.9);transform-origin:50% 50%">18</span></div>
<div style="left:287.6px;top:694.1px;width:122px;height:14.85px;font-size:9.5px;line-height:15px;color:#1a1a1a;border-right:1px solid #d4d4d4;border-bottom:1px solid #d4d4d4;text-align:right;padding-right:2.5px"><span style="display:inline-block;transform:scaleX(0.9);transform-origin:100% 50%">15 421</span></div>
<div style="left:409.6px;top:694.1px;width:118px;height:14.85px;font-size:9.5px;line-height:15px;color:#1a1a1a;border-right:1px solid #d4d4d4;border-bottom:1px solid #d4d4d4;text-align:right;padding-right:2.5px;"><span style="display:inline-block;transform:scaleX(0.9);transform-origin:100% 50%">55 040</span></div>
<div style="left:16px;top:708.95px;width:191.7px;height:14.85px;font-size:9.5px;line-height:15px;color:#1a1a1a;border-right:1px solid #d4d4d4;border-bottom:1px solid #d4d4d4;padding-left:2px"><span style="display:inline-block;transform:scaleX(0.91);transform-origin:0 50%">Сметная стоимость материалов</span></div>
<div style="left:207.7px;top:708.95px;width:79.9px;height:14.85px;font-size:9.5px;line-height:15px;color:#1a1a1a;border-right:1px solid #d4d4d4;border-bottom:1px solid #d4d4d4;text-align:center;"></div>
<div style="left:287.6px;top:708.95px;width:122px;height:14.85px;font-size:9.5px;line-height:15px;color:#1a1a1a;border-right:1px solid #d4d4d4;border-bottom:1px solid #d4d4d4;text-align:right;padding-right:2.5px"><span style="display:inline-block;transform:scaleX(0.9);transform-origin:100% 50%">115 219</span></div>
<div style="left:409.6px;top:708.95px;width:118px;height:14.85px;font-size:9.5px;line-height:15px;color:#1a1a1a;border-right:1px solid #d4d4d4;border-bottom:1px solid #d4d4d4;text-align:right;padding-right:2.5px;"><span style="display:inline-block;transform:scaleX(0.9);transform-origin:100% 50%">1 040 689</span></div>
<div style="left:16px;top:723.8px;width:191.7px;height:14.85px;font-size:9.5px;line-height:15px;color:#1a1a1a;border-right:1px solid #d4d4d4;border-bottom:1px solid #d4d4d4;padding-left:2px"><span style="display:inline-block;transform:scaleX(0.91);transform-origin:0 50%">Материалы с заготов. и транспортными</span></div>
<div style="left:207.7px;top:723.8px;width:79.9px;height:14.85px;font-size:9.5px;line-height:15px;color:#1a1a1a;border-right:1px solid #d4d4d4;border-bottom:1px solid #d4d4d4;text-align:center;background:#c1e0c2;"><span style="display:inline-block;transform:scaleX(0.9);transform-origin:50% 50%">1.092</span></div>
<div style="left:287.6px;top:723.8px;width:122px;height:14.85px;font-size:9.5px;line-height:15px;color:#1a1a1a;border-right:1px solid #d4d4d4;border-bottom:1px solid #d4d4d4;text-align:right;padding-right:2.5px"><span style="display:inline-block;transform:scaleX(0.9);transform-origin:100% 50%">125 819</span></div>
<div style="left:409.6px;top:723.8px;width:118px;height:14.85px;font-size:9.5px;line-height:15px;color:#1a1a1a;border-right:1px solid #d4d4d4;border-bottom:1px solid #d4d4d4;text-align:right;padding-right:2.5px;background:#b5b5b5;"><span style="display:inline-block;transform:scaleX(0.9);transform-origin:100% 50%">1 136 432</span></div>
<div style="left:16px;top:738.65px;width:191.7px;height:14.85px;font-size:9.5px;line-height:15px;color:#1a1a1a;border-right:1px solid #d4d4d4;border-bottom:1px solid #d4d4d4;padding-left:2px"><span style="display:inline-block;transform:scaleX(0.91);transform-origin:0 50%">- В материалах, %</span></div>
<div style="left:207.7px;top:738.65px;width:79.9px;height:14.85px;font-size:9.5px;line-height:15px;color:#1a1a1a;border-right:1px solid #d4d4d4;border-bottom:1px solid #d4d4d4;text-align:center;background:#c1e0c2;"><span style="display:inline-block;transform:scaleX(0.9);transform-origin:50% 50%">18</span></div>
<div style="left:287.6px;top:738.65px;width:122px;height:14.85px;font-size:9.5px;line-height:15px;color:#1a1a1a;border-right:1px solid #d4d4d4;border-bottom:1px solid #d4d4d4;text-align:right;padding-right:2.5px"><span style="display:inline-block;transform:scaleX(0.9);transform-origin:100% 50%">22 647</span></div>
<div style="left:409.6px;top:738.65px;width:118px;height:14.85px;font-size:9.5px;line-height:15px;color:#1a1a1a;border-right:1px solid #d4d4d4;border-bottom:1px solid #d4d4d4;text-align:right;padding-right:2.5px;"><span style="display:inline-block;transform:scaleX(0.9);transform-origin:100% 50%">204 558</span></div>
<svg style="position:absolute;left:0;top:0" width="1500" height="819" viewBox="0 0 1500 819" fill="none"><path d="M12 712 Q13 708 30 708.5 Q90 706.5 152 708.5 Q165 711 163 717 Q160 723 140 724.5 Q70 726.5 20 724.5 Q10 722 12 712Z" stroke="#3a3a3a" stroke-width="1"/><path d="M477 710.5 Q500 708.5 524 709.5 Q528.5 713 527.5 719 Q526 723 515 723.5 Q495 724.5 480 723 Q474 720 475 714 Q475 711 477 710.5Z" stroke="#3a3a3a" stroke-width="1"/></svg>
<div style="left:0px;top:758.5px;width:1500px;height:1px;background:#c6c6c6"></div>
<div class="btn" style="left:1px;top:763.5px;width:159px;height:19px;font-size:10.450px;line-height:19.500px;padding-left:24.5px;color:#2a2a2a"><svg width="9" height="11" viewBox="0 0 9 11" style="position:absolute;left:10px;top:4px"><path d="M.8.8h4.7l2.7 2.7v6.7H.8z" fill="#fbf8d8" stroke="#55502a" stroke-width="1.1"/><path d="M2.6 5.2h2.2M2.6 7.2h3.6" stroke="#55502a" stroke-width="1"/></svg>Ctrl+O - Считать из файла</div>
<div class="btn" style="left:164.5px;top:763.5px;width:158px;height:19px;font-size:10.450px;line-height:19.500px;padding-left:23.5px;color:#2a2a2a"><svg width="14" height="14" viewBox="0 0 14 14" style="position:absolute;left:7px;top:1.5px"><path d="M.8.8h5l2.4 2.4v6.3H.8z" fill="#f4f4f4" stroke="#333" stroke-width="1"/><path d="M2.4 4.5h3M2.4 6.5h4" stroke="#333" stroke-width=".9"/><path d="M7.2 1.2h3.4v3.2H7.2z" fill="#d81c28"/><path d="M6.8 7.6h6.4v6H6.8z" fill="#141414"/><rect x="8.2" y="8.2" width="3.6" height="2" fill="#e8e8e8"/><rect x="8.6" y="11.6" width="2.6" height="2" fill="#c02020"/></svg>Ctrl+S - Сохранить в файл</div>
<div class="btn" style="left:326.5px;top:763.5px;width:104.5px;height:19px;font-size:10.450px;line-height:19.500px;padding-left:21.5px;color:#2a2a2a"><svg width="16" height="15" viewBox="0 0 16 15" style="position:absolute;left:6px;top:1.5px"><path d="M13.6.8l1.6 1.6-7.6 8.2-2.2.8.6-2.4z" fill="#d02020" stroke="#601010" stroke-width=".6"/><path d="M11.6 1.6l2.6 2.6" stroke="#e8c020" stroke-width="1.3"/><path d="M2 13.6c1.6-3.2 3.2-3.6 3.6-2s-2 2.4-3.4 2.6c2 .2 5.200-.200 6.800-2.200" fill="none" stroke="#181818" stroke-width="1.2"/></svg>F7 - Обнуление</div>
<div style="left:437px;top:766.5px;width:11px;height:11px;background:#fff;border:1px solid #8c8c8c;border-right-color:#ececec;border-bottom-color:#ececec"></div>
<div style="left:451px;top:763.5px;width:170px;height:19px;font-size:10.75px;line-height:19px;color:#2a2a2a;white-space:pre">F6 - Цена  с учетом начислений</div>
<div style="left:627.5px;top:763.5px;width:19px;height:19px;background:#f2f2f2;border:1px solid #9a9a9a;border-right-color:#fdfdfd;border-bottom-color:#fdfdfd"></div>
<div style="left:647.5px;top:763.5px;width:19px;height:19px;background:#f2f2f2;border:1px solid #9a9a9a;border-right-color:#fdfdfd;border-bottom-color:#fdfdfd"></div>
<div style="left:667.5px;top:763.5px;width:19px;height:19px;background:#f2f2f2;border:1px solid #9a9a9a;border-right-color:#fdfdfd;border-bottom-color:#fdfdfd"></div>
<svg style="position:absolute;left:627px;top:763px" width="62" height="20" viewBox="0 0 62 20"><circle cx="7.5" cy="7.4" r="2.9" fill="#a0522d"/><path d="M2.600 15.600q0-5 5-5t5 5z" fill="#2850c8"/><circle cx="13" cy="7.800" r="2.500" fill="#e6be40"/><path d="M10.600 15.200q0-4 3-4t3 4z" fill="#38a838"/><g fill="#b43c22" stroke="#5a1a0a" stroke-width=".8"><rect x="27" y="5" width="6" height="3.200"/><rect x="24.500" y="8.500" width="5.500" height="3.200"/><rect x="30.300" y="8.500" width="5.500" height="3.200"/><rect x="23" y="12" width="4.600" height="3.200"/><rect x="27.900" y="12" width="4.600" height="3.200"/><rect x="32.800" y="12" width="4.500" height="3.200"/></g><path d="M45 9.500h3.500V6h5v3.500h3.500l1.500 2v3H45z" fill="#8a8a10" stroke="#3a3a08" stroke-width=".7"/><rect x="49.500" y="7" width="3" height="2.500" fill="#cfe6f0"/><circle cx="47.800" cy="15" r="2.300" fill="#202020"/><circle cx="55.300" cy="15" r="2.300" fill="#202020"/><circle cx="47.800" cy="15" r=".9" fill="#c8c830"/><circle cx="55.300" cy="15" r=".9" fill="#c8c830"/></svg>
<div style="left:0px;top:786.2px;width:1500px;height:1px;background:#bebebe"></div>
<div style="left:0px;top:787.2px;width:1500px;height:1px;background:#f4f4f4"></div>
<div style="left:4px;top:793.5px;width:49px;height:18.5px;background:#e3e3e3;border:1px solid #b4b4b4;border-right-color:#f8f8f8;border-bottom-color:#f8f8f8;font-size:10.8px;line-height:18px;padding-left:3.5px;color:#3a3a3a"><span class="k" style="transform:scaleX(.88)">23:85</span></div>
<div style="left:57.5px;top:793.5px;width:18.5px;height:18.5px;background:#eee;border:1px solid #9a9a9a;border-right-color:#fdfdfd;border-bottom-color:#fdfdfd"></div>
<svg style="position:absolute;left:61px;top:797px" width="13" height="13" viewBox="-6.500 -6.500 13 13"><g fill="#2a2a2a"><circle r="3.900"/><g id="t"><rect x="-1.200" y="-5.800" width="2.400" height="11.600" rx=".6"/></g><rect x="-1.200" y="-5.800" width="2.400" height="11.600" rx=".6" transform="rotate(45)"/><rect x="-1.200" y="-5.800" width="2.400" height="11.600" rx=".6" transform="rotate(90)"/><rect x="-1.200" y="-5.800" width="2.400" height="11.600" rx=".6" transform="rotate(135)"/></g><circle r="1.300" fill="#ddd"/></svg>
<div class="btn" style="left:80px;top:794px;width:62px;height:18px;white-space:normal;text-align:center;font-size:8.7px;line-height:7.8px;padding-top:1.200px;color:#2a2a2a">Параметры расчета</div>
<div style="left:147px;top:793.5px;width:84.5px;height:18.5px;background:#fbfbfb;border:1px solid #b0b0b0;border-right-color:#f4f4f4;border-bottom-color:#f4f4f4;font-weight:bold;font-size:9.2px;line-height:18px;text-align:center;color:#111;letter-spacing:.15px">ТЕКУЩИЕ</div>
<div style="left:234.5px;top:794px;width:176.5px;height:18px;background:#000;color:#34dc34;font-weight:bold;font-size:11px;line-height:16px;padding-left:1px;letter-spacing:.3px">Итого: 2 904 532 руб.</div>
<div class="btn" style="left:413px;top:796px;width:14.5px;height:14.5px;"><svg width="12" height="12" viewBox="0 0 12 12" style="position:absolute;left:.5px;top:.5px"><circle cx="6" cy="6" r="3.300" fill="#8a8a8a" stroke="#444" stroke-width=".8"/><path d="M4.500 7.500l3-3" stroke="#eee" stroke-width="1"/></svg></div>
<div class="btn" style="left:1318.5px;top:793.5px;width:81.5px;height:20.5px;font-size:10.900px;line-height:20px;color:#2a2a2a;padding-left:27.500px"><svg width="12" height="12" viewBox="0 0 12 12" style="position:absolute;left:11px;top:3.500px"><path d="M1.500 1.500l9 9M10.500 1.500l-9 9" stroke="#b81018" stroke-width="2.600" fill="none"/></svg>Закрыть</div>
<div class="btn" style="left:1412px;top:793.5px;width:82px;height:20.5px;font-size:10.900px;line-height:20px;color:#2a2a2a;padding-left:28px"><span style="position:absolute;left:12px;top:-1px;color:#0a8a9a;font-weight:bold;font-size:14px">?</span>Справка</div>
<div style="left:1404px;top:798.7px;width:99px;height:20px;font-weight:bold;font-size:13.300px;line-height:20px;letter-spacing:.3px;text-align:center;transform:scaleX(.9);transform-origin:50% 50%;color:#000;-webkit-text-stroke:2.800px #000">CMET4UK.RU</div>
<div style="left:1404px;top:798.7px;width:99px;height:20px;font-weight:bold;font-size:13.300px;line-height:20px;letter-spacing:.3px;text-align:center;transform:scaleX(.9);transform-origin:50% 50%;color:#fff;-webkit-text-stroke:.5px #fff">CMET4UK.RU</div>
</body></html>
